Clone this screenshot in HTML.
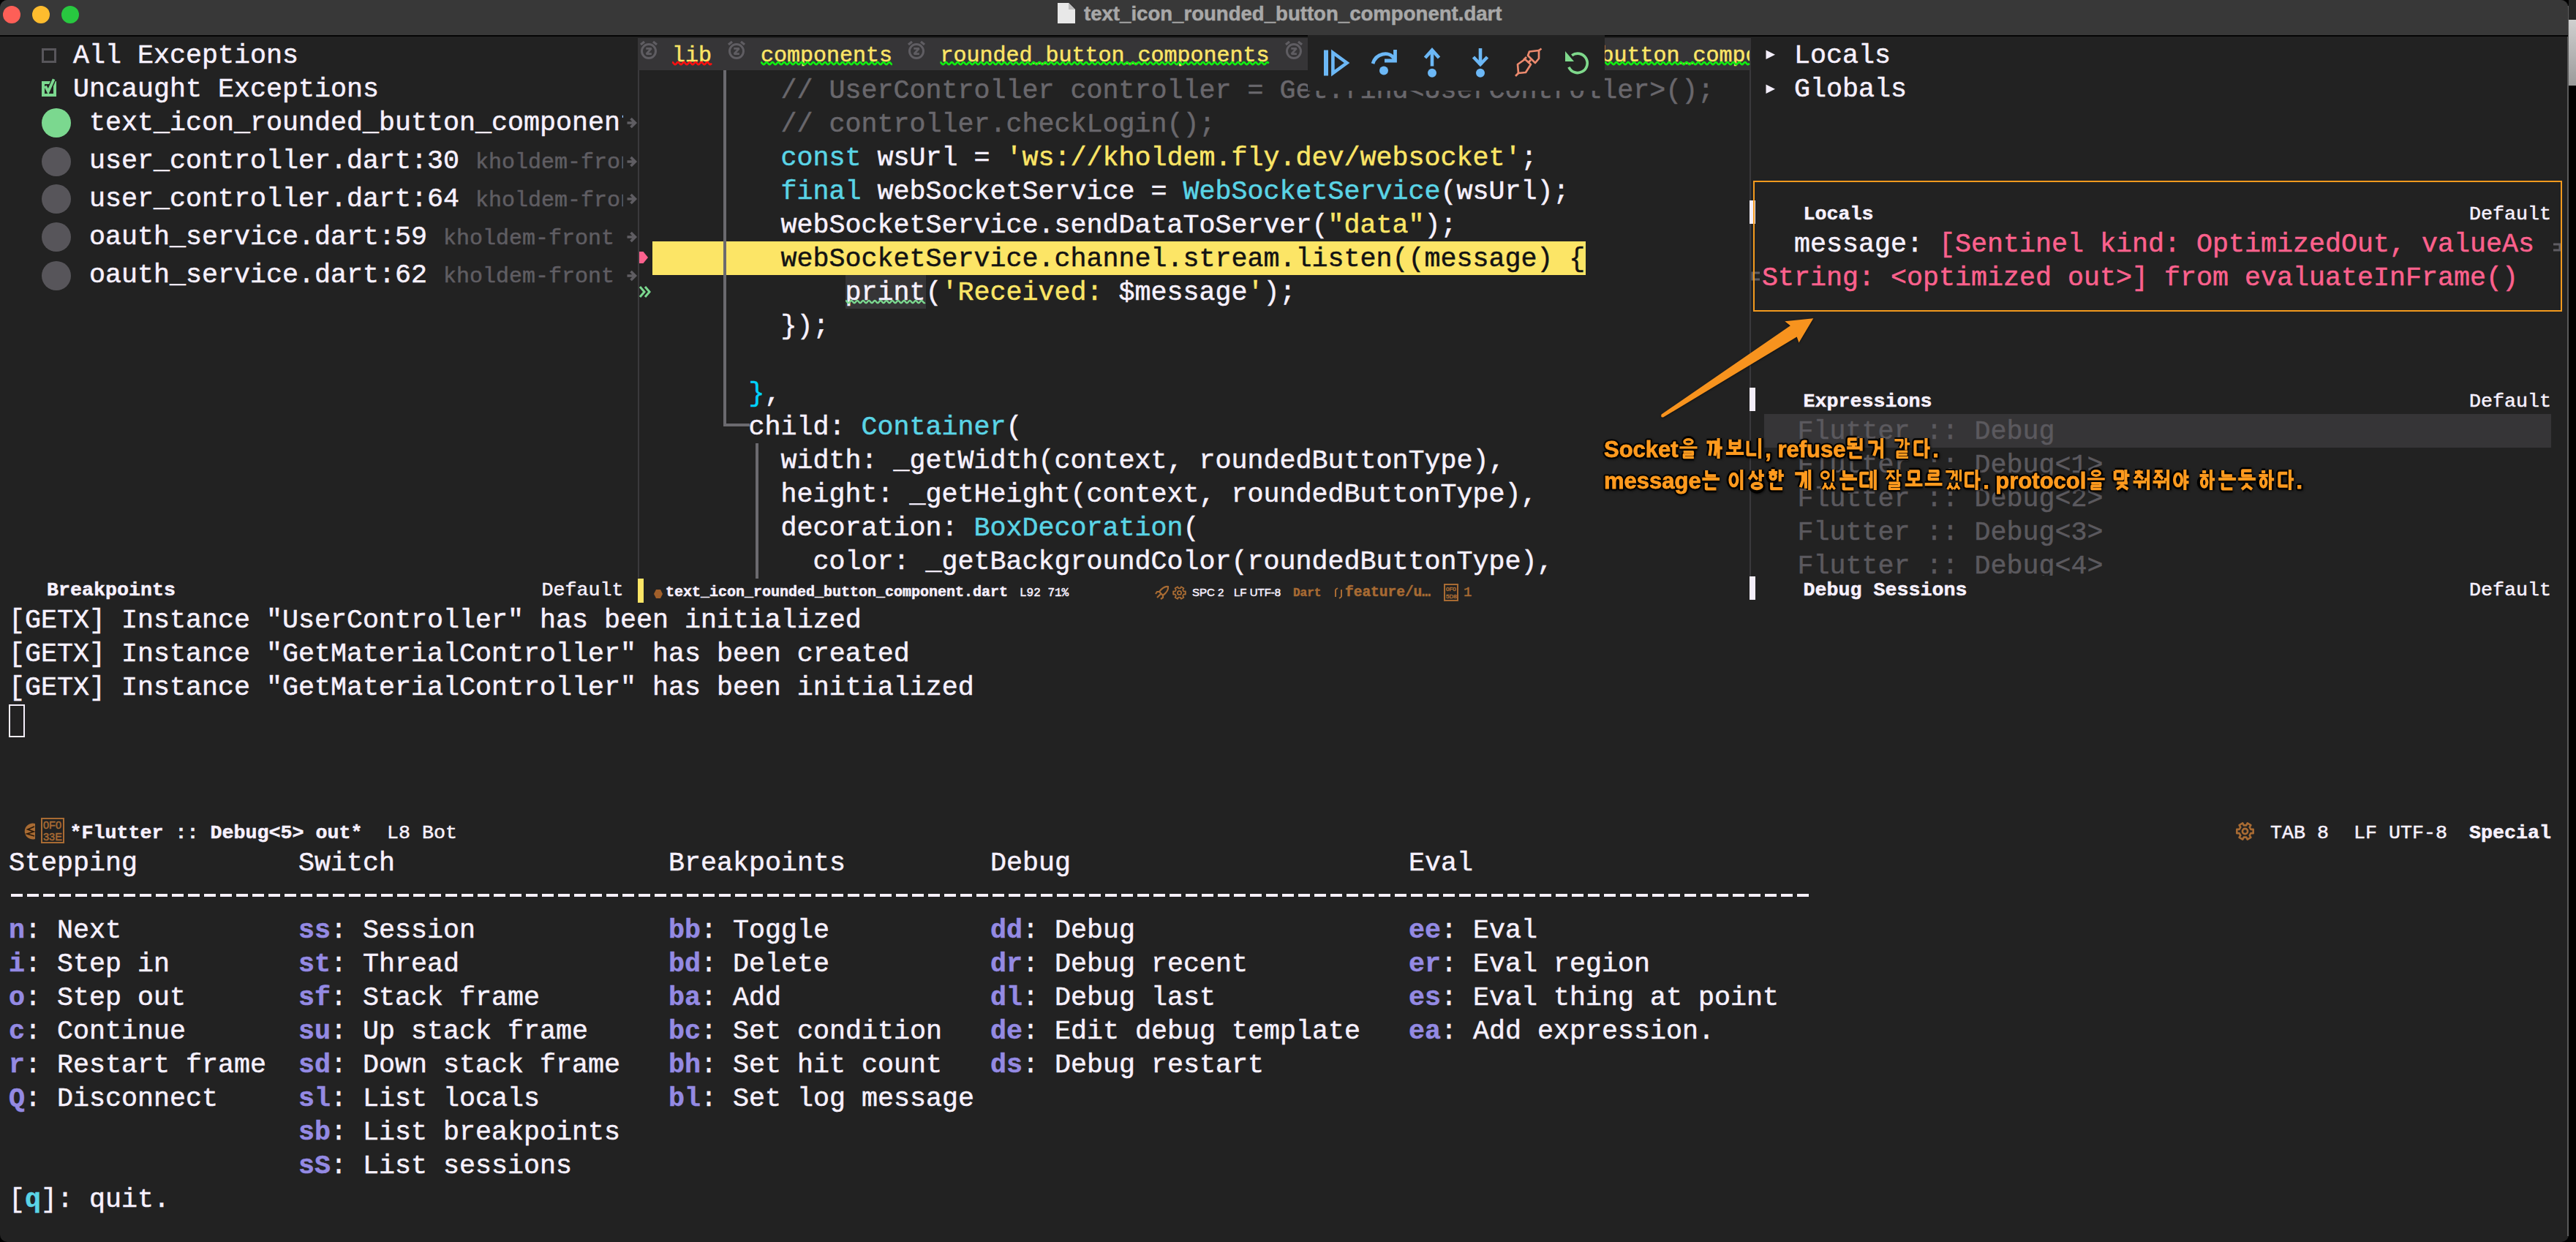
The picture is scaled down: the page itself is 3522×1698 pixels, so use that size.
<!DOCTYPE html>
<html><head><meta charset="utf-8"><style>
html,body{margin:0;padding:0;}
body{width:3522px;height:1698px;position:relative;overflow:hidden;background:#0b0b0b;}
.t{position:absolute;white-space:pre;-webkit-text-stroke:0.5px currentColor;}
svg{overflow:visible}
</style></head><body>
<div style="position:absolute;left:0px;top:0px;width:3522px;height:1698px;background:#000000;"></div>
<div style="position:absolute;left:3512px;top:0px;width:10px;height:27px;background:#262626;"></div>
<div style="position:absolute;left:3512px;top:27px;width:10px;height:90px;background:#c4c4c4;background:linear-gradient(#d0d0d0,#9a9a9a)"></div>
<div style="position:absolute;left:0;top:0;width:3512px;height:1698px;background:#222222;border-radius:10px 10px 10px 10px;overflow:hidden" id=win></div>
<div style="position:absolute;left:3510px;top:8px;width:2px;height:1682px;background:#5a5a5a;"></div>
<div style="position:absolute;left:0px;top:0px;width:3511px;height:48px;background:#383838;border-radius:10px 10px 0 0"></div>
<div style="position:absolute;left:0px;top:48px;width:3511px;height:1.6px;background:#050505;"></div>
<div style="position:absolute;left:4px;top:8px;width:24px;height:24px;background:#fe5f57;border-radius:50%"></div>
<div style="position:absolute;left:44px;top:8px;width:24px;height:24px;background:#febc2e;border-radius:50%"></div>
<div style="position:absolute;left:84px;top:8px;width:24px;height:24px;background:#28c840;border-radius:50%"></div>
<svg style="position:absolute;left:1444px;top:3px;" width="28" height="31" viewBox="0 0 28 31"><path d="M2 1 H17 L26 10 V29 H2 Z" fill="#e8e8e8"/><path d="M17 1 V10 H26" fill="#bdbdbd"/></svg>
<div class=t style="left:1482px;top:-2.00px;font-family:'Liberation Sans';font-weight:bold;font-size:27.58px;line-height:41.37px;"><span style="color:#a8a8a8;">text_icon_rounded_button_component.dart</span></div>
<div style="position:absolute;left:57px;top:66px;width:20px;height:20px;background:transparent;box-sizing:border-box;border:3.5px solid #58565b"></div>
<div class=t style="left:100.0px;top:49.00px;font-family:'Liberation Mono';font-weight:normal;font-size:36.67px;line-height:55.005px;"><span style="color:#f7f1ff;">All Exceptions</span></div>
<div style="position:absolute;left:57px;top:111px;width:20px;height:21px;background:transparent;box-sizing:border-box;border:4px solid #7bd88f"></div>
<svg style="position:absolute;left:57px;top:106px;" width="22" height="26" viewBox="0 0 22 26"><path d="M12.2 12.5 L16.6 2.2" fill="none" stroke="#222222" stroke-width="6.4"/><path d="M4.9 11.6 L8.9 19.2 L16.6 2.2" fill="none" stroke="#7bd88f" stroke-width="3.8"/></svg>
<div class=t style="left:100.0px;top:95.00px;font-family:'Liberation Mono';font-weight:normal;font-size:36.67px;line-height:55.005px;"><span style="color:#f7f1ff;">Uncaught Exceptions</span></div>
<div style="position:absolute;left:57.3px;top:148.3px;width:40px;height:40px;background:#7bd88f;border-radius:50%"></div>
<div style="position:absolute;left:122px;top:138.3px;width:730px;height:60px;overflow:hidden">
<div class=t style="left:0px;top:3.00px;font-family:'Liberation Mono';font-weight:normal;font-size:36.67px;line-height:55.005px;"><span style="color:#f7f1ff;">text_icon_rounded_button_component.dart:92</span></div>
</div>
<svg style="position:absolute;left:857px;top:160.3px;" width="14" height="16" viewBox="0 0 14 16"><path d="M0.5 8 H11 M5.5 2 L11.5 8 L5.5 14" fill="none" stroke="#5f5d62" stroke-width="3.6"/></svg>
<div style="position:absolute;left:57.3px;top:200.6px;width:40px;height:40px;background:#57555a;border-radius:50%"></div>
<div style="position:absolute;left:122px;top:190.6px;width:730px;height:60px;overflow:hidden">
<div class=t style="left:0px;top:2.80px;font-family:'Liberation Mono';font-weight:normal;font-size:36.67px;line-height:55.005px;"><span style="color:#f7f1ff;">user_controller.dart:30</span></div>
<div class=t style="left:528.0px;top:9.80px;font-family:'Liberation Mono';font-weight:normal;font-size:30px;line-height:45.0px;"><span style="color:#5f5d62;">kholdem-front</span></div>
</div>
<svg style="position:absolute;left:857px;top:212.6px;" width="14" height="16" viewBox="0 0 14 16"><path d="M0.5 8 H11 M5.5 2 L11.5 8 L5.5 14" fill="none" stroke="#5f5d62" stroke-width="3.6"/></svg>
<div style="position:absolute;left:57.3px;top:252.3px;width:40px;height:40px;background:#57555a;border-radius:50%"></div>
<div style="position:absolute;left:122px;top:242.3px;width:730px;height:60px;overflow:hidden">
<div class=t style="left:0px;top:3.00px;font-family:'Liberation Mono';font-weight:normal;font-size:36.67px;line-height:55.005px;"><span style="color:#f7f1ff;">user_controller.dart:64</span></div>
<div class=t style="left:528.0px;top:10.00px;font-family:'Liberation Mono';font-weight:normal;font-size:30px;line-height:45.0px;"><span style="color:#5f5d62;">kholdem-front</span></div>
</div>
<svg style="position:absolute;left:857px;top:264.3px;" width="14" height="16" viewBox="0 0 14 16"><path d="M0.5 8 H11 M5.5 2 L11.5 8 L5.5 14" fill="none" stroke="#5f5d62" stroke-width="3.6"/></svg>
<div style="position:absolute;left:57.3px;top:304.2px;width:40px;height:40px;background:#57555a;border-radius:50%"></div>
<div style="position:absolute;left:122px;top:294.2px;width:730px;height:60px;overflow:hidden">
<div class=t style="left:0px;top:2.40px;font-family:'Liberation Mono';font-weight:normal;font-size:36.67px;line-height:55.005px;"><span style="color:#f7f1ff;">oauth_service.dart:59</span></div>
<div class=t style="left:484.0px;top:9.40px;font-family:'Liberation Mono';font-weight:normal;font-size:30px;line-height:45.0px;"><span style="color:#5f5d62;">kholdem-front</span></div>
</div>
<svg style="position:absolute;left:857px;top:316.2px;" width="14" height="16" viewBox="0 0 14 16"><path d="M0.5 8 H11 M5.5 2 L11.5 8 L5.5 14" fill="none" stroke="#5f5d62" stroke-width="3.6"/></svg>
<div style="position:absolute;left:57.3px;top:356.5px;width:40px;height:40px;background:#57555a;border-radius:50%"></div>
<div style="position:absolute;left:122px;top:346.5px;width:730px;height:60px;overflow:hidden">
<div class=t style="left:0px;top:2.50px;font-family:'Liberation Mono';font-weight:normal;font-size:36.67px;line-height:55.005px;"><span style="color:#f7f1ff;">oauth_service.dart:62</span></div>
<div class=t style="left:484.0px;top:9.50px;font-family:'Liberation Mono';font-weight:normal;font-size:30px;line-height:45.0px;"><span style="color:#5f5d62;">kholdem-front</span></div>
</div>
<svg style="position:absolute;left:857px;top:368.5px;" width="14" height="16" viewBox="0 0 14 16"><path d="M0.5 8 H11 M5.5 2 L11.5 8 L5.5 14" fill="none" stroke="#5f5d62" stroke-width="3.6"/></svg>
<div class=t style="left:64px;top:787.00px;font-family:'Liberation Mono';font-weight:bold;font-size:26.67px;line-height:40.005px;"><span style="color:#f7f1ff;">Breakpoints</span></div>
<div class=t style="left:740.5px;top:787.00px;font-family:'Liberation Mono';font-weight:normal;font-size:26.67px;line-height:40.005px;"><span style="color:#f7f1ff;">Default</span></div>
<div style="position:absolute;left:872px;top:96px;width:2px;height:694px;background:#3a393c;"></div>
<div style="position:absolute;left:2392px;top:96px;width:2px;height:178px;background:#3a393c;"></div>
<div style="position:absolute;left:2392px;top:306px;width:2px;height:224px;background:#3a393c;"></div>
<div style="position:absolute;left:2392px;top:562px;width:2px;height:226px;background:#3a393c;"></div>
<div style="position:absolute;left:872px;top:52px;width:1522px;height:44px;background:#363537;"></div>
<div style="position:absolute;left:892px;top:330px;width:1276px;height:46px;background:#fce566;"></div>
<div style="position:absolute;left:1155.5px;top:376px;width:110px;height:46px;background:#363537;"></div>
<div style="position:absolute;left:989px;top:96px;width:4px;height:486px;background:#6b6a6f;"></div>
<div style="position:absolute;left:989px;top:579px;width:36px;height:3.5px;background:#6b6a6f;"></div>
<div style="position:absolute;left:1033px;top:606px;width:4px;height:185px;background:#6b6a6f;"></div>
<div style="position:absolute;left:874px;top:96px;width:1518px;height:694px;overflow:hidden">
<div class=t style="left:193.5px;top:0.50px;font-family:'Liberation Mono';font-weight:normal;font-size:36.67px;line-height:55.005px;"><span style="color:#69676c;">// UserController controller = Get.find&lt;UserController&gt;();</span></div>
<div class=t style="left:193.5px;top:46.50px;font-family:'Liberation Mono';font-weight:normal;font-size:36.67px;line-height:55.005px;"><span style="color:#69676c;">// controller.checkLogin();</span></div>
<div class=t style="left:193.5px;top:92.50px;font-family:'Liberation Mono';font-weight:normal;font-size:36.67px;line-height:55.005px;"><span style="color:#5ad4e6;">const</span><span style="color:#f7f1ff;"> wsUrl = </span><span style="color:#fce566;">'ws://kholdem.fly.dev/websocket'</span><span style="color:#f7f1ff;">;</span></div>
<div class=t style="left:193.5px;top:138.50px;font-family:'Liberation Mono';font-weight:normal;font-size:36.67px;line-height:55.005px;"><span style="color:#5ad4e6;">final</span><span style="color:#f7f1ff;"> webSocketService = </span><span style="color:#5ad4e6;">WebSocketService</span><span style="color:#f7f1ff;">(wsUrl);</span></div>
<div class=t style="left:193.5px;top:184.50px;font-family:'Liberation Mono';font-weight:normal;font-size:36.67px;line-height:55.005px;"><span style="color:#f7f1ff;">webSocketService.sendDataToServer(</span><span style="color:#fce566;">"data"</span><span style="color:#f7f1ff;">);</span></div>
<div class=t style="left:193.5px;top:230.50px;font-family:'Liberation Mono';font-weight:normal;font-size:36.67px;line-height:55.005px;"><span style="color:#131313;">webSocketService.channel.stream.listen((message) {</span></div>
<div class=t style="left:281.5px;top:276.50px;font-family:'Liberation Mono';font-weight:normal;font-size:36.67px;line-height:55.005px;"><span style="color:#f7f1ff;">print(</span><span style="color:#fce566;">'Received: </span><span style="color:#f7f1ff;">$message</span><span style="color:#fce566;">'</span><span style="color:#f7f1ff;">);</span></div>
<div class=t style="left:193.5px;top:322.50px;font-family:'Liberation Mono';font-weight:normal;font-size:36.67px;line-height:55.005px;"><span style="color:#f7f1ff;">});</span></div>
<div class=t style="left:149.5px;top:414.50px;font-family:'Liberation Mono';font-weight:normal;font-size:36.67px;line-height:55.005px;"><span style="color:#00d2ff;">}</span><span style="color:#f7f1ff;">,</span></div>
<div class=t style="left:149.5px;top:460.50px;font-family:'Liberation Mono';font-weight:normal;font-size:36.67px;line-height:55.005px;"><span style="color:#f7f1ff;">child: </span><span style="color:#5ad4e6;">Container</span><span style="color:#f7f1ff;">(</span></div>
<div class=t style="left:193.5px;top:506.50px;font-family:'Liberation Mono';font-weight:normal;font-size:36.67px;line-height:55.005px;"><span style="color:#f7f1ff;">width: _getWidth(context, roundedButtonType),</span></div>
<div class=t style="left:193.5px;top:552.50px;font-family:'Liberation Mono';font-weight:normal;font-size:36.67px;line-height:55.005px;"><span style="color:#f7f1ff;">height: _getHeight(context, roundedButtonType),</span></div>
<div class=t style="left:193.5px;top:598.50px;font-family:'Liberation Mono';font-weight:normal;font-size:36.67px;line-height:55.005px;"><span style="color:#f7f1ff;">decoration: </span><span style="color:#5ad4e6;">BoxDecoration</span><span style="color:#f7f1ff;">(</span></div>
<div class=t style="left:237.5px;top:644.50px;font-family:'Liberation Mono';font-weight:normal;font-size:36.67px;line-height:55.005px;"><span style="color:#f7f1ff;">color: _getBackgroundColor(roundedButtonType),</span></div>
</div>
<svg style="position:absolute;left:1154px;top:409.4px;" width="113" height="7.2" viewBox="0 0 113 7.2"><polyline points="2.0,2.00 2.5,2.12 3.0,2.47 3.5,2.99 4.0,3.60 4.5,4.21 5.0,4.73 5.5,5.08 6.0,5.20 6.5,5.08 7.0,4.73 7.5,4.21 8.0,3.60 8.5,2.99 9.0,2.47 9.5,2.12 10.0,2.00 10.5,2.12 11.0,2.47 11.5,2.99 12.0,3.60 12.5,4.21 13.0,4.73 13.5,5.08 14.0,5.20 14.5,5.08 15.0,4.73 15.5,4.21 16.0,3.60 16.5,2.99 17.0,2.47 17.5,2.12 18.0,2.00 18.5,2.12 19.0,2.47 19.5,2.99 20.0,3.60 20.5,4.21 21.0,4.73 21.5,5.08 22.0,5.20 22.5,5.08 23.0,4.73 23.5,4.21 24.0,3.60 24.5,2.99 25.0,2.47 25.5,2.12 26.0,2.00 26.5,2.12 27.0,2.47 27.5,2.99 28.0,3.60 28.5,4.21 29.0,4.73 29.5,5.08 30.0,5.20 30.5,5.08 31.0,4.73 31.5,4.21 32.0,3.60 32.5,2.99 33.0,2.47 33.5,2.12 34.0,2.00 34.5,2.12 35.0,2.47 35.5,2.99 36.0,3.60 36.5,4.21 37.0,4.73 37.5,5.08 38.0,5.20 38.5,5.08 39.0,4.73 39.5,4.21 40.0,3.60 40.5,2.99 41.0,2.47 41.5,2.12 42.0,2.00 42.5,2.12 43.0,2.47 43.5,2.99 44.0,3.60 44.5,4.21 45.0,4.73 45.5,5.08 46.0,5.20 46.5,5.08 47.0,4.73 47.5,4.21 48.0,3.60 48.5,2.99 49.0,2.47 49.5,2.12 50.0,2.00 50.5,2.12 51.0,2.47 51.5,2.99 52.0,3.60 52.5,4.21 53.0,4.73 53.5,5.08 54.0,5.20 54.5,5.08 55.0,4.73 55.5,4.21 56.0,3.60 56.5,2.99 57.0,2.47 57.5,2.12 58.0,2.00 58.5,2.12 59.0,2.47 59.5,2.99 60.0,3.60 60.5,4.21 61.0,4.73 61.5,5.08 62.0,5.20 62.5,5.08 63.0,4.73 63.5,4.21 64.0,3.60 64.5,2.99 65.0,2.47 65.5,2.12 66.0,2.00 66.5,2.12 67.0,2.47 67.5,2.99 68.0,3.60 68.5,4.21 69.0,4.73 69.5,5.08 70.0,5.20 70.5,5.08 71.0,4.73 71.5,4.21 72.0,3.60 72.5,2.99 73.0,2.47 73.5,2.12 74.0,2.00 74.5,2.12 75.0,2.47 75.5,2.99 76.0,3.60 76.5,4.21 77.0,4.73 77.5,5.08 78.0,5.20 78.5,5.08 79.0,4.73 79.5,4.21 80.0,3.60 80.5,2.99 81.0,2.47 81.5,2.12 82.0,2.00 82.5,2.12 83.0,2.47 83.5,2.99 84.0,3.60 84.5,4.21 85.0,4.73 85.5,5.08 86.0,5.20 86.5,5.08 87.0,4.73 87.5,4.21 88.0,3.60 88.5,2.99 89.0,2.47 89.5,2.12 90.0,2.00 90.5,2.12 91.0,2.47 91.5,2.99 92.0,3.60 92.5,4.21 93.0,4.73 93.5,5.08 94.0,5.20 94.5,5.08 95.0,4.73 95.5,4.21 96.0,3.60 96.5,2.99 97.0,2.47 97.5,2.12 98.0,2.00 98.5,2.12 99.0,2.47 99.5,2.99 100.0,3.60 100.5,4.21 101.0,4.73 101.5,5.08 102.0,5.20 102.5,5.08 103.0,4.73 103.5,4.21 104.0,3.60 104.5,2.99 105.0,2.47 105.5,2.12 106.0,2.00 106.5,2.12 107.0,2.47 107.5,2.99 108.0,3.60 108.5,4.21 109.0,4.73 109.5,5.08 110.0,5.20 110.5,5.08 111.0,4.73" fill="none" stroke="#7bd88f" stroke-width="2.4" stroke-linejoin="round"/></svg>
<svg style="position:absolute;left:874px;top:343px;" width="13" height="18" viewBox="0 0 13 18"><path d="M0 1 H5.5 L12 9 L5.5 17 H0 Z" fill="#fc618d"/></svg>
<svg style="position:absolute;left:873px;top:390px;" width="19" height="18" viewBox="0 0 19 18"><path d="M2 2 L8 9 L2 16 M9 2 L15 9 L9 16" fill="none" stroke="#7bd88f" stroke-width="3"/></svg>
<svg style="position:absolute;left:874px;top:55px;" width="26" height="27" viewBox="0 0 26 27"><circle cx="13" cy="15" r="9.5" fill="none" stroke="#5f5d62" stroke-width="3"/><path d="M2 6 L7 2 M24 6 L19 2" stroke="#5f5d62" stroke-width="3.2"/><path d="M9.3 11.3 H16.5 L9.8 18.6 H16.9" fill="none" stroke="#5f5d62" stroke-width="2.8" stroke-linejoin="bevel"/></svg>
<div class=t style="left:919px;top:53.50px;font-family:'Liberation Mono';font-weight:normal;font-size:30px;line-height:45.0px;"><span style="color:#fce566;">lib</span></div>
<svg style="position:absolute;left:917px;top:83.30000000000001px;" width="58" height="7.2" viewBox="0 0 58 7.2"><polyline points="2.0,2.00 2.5,2.12 3.0,2.47 3.5,2.99 4.0,3.60 4.5,4.21 5.0,4.73 5.5,5.08 6.0,5.20 6.5,5.08 7.0,4.73 7.5,4.21 8.0,3.60 8.5,2.99 9.0,2.47 9.5,2.12 10.0,2.00 10.5,2.12 11.0,2.47 11.5,2.99 12.0,3.60 12.5,4.21 13.0,4.73 13.5,5.08 14.0,5.20 14.5,5.08 15.0,4.73 15.5,4.21 16.0,3.60 16.5,2.99 17.0,2.47 17.5,2.12 18.0,2.00 18.5,2.12 19.0,2.47 19.5,2.99 20.0,3.60 20.5,4.21 21.0,4.73 21.5,5.08 22.0,5.20 22.5,5.08 23.0,4.73 23.5,4.21 24.0,3.60 24.5,2.99 25.0,2.47 25.5,2.12 26.0,2.00 26.5,2.12 27.0,2.47 27.5,2.99 28.0,3.60 28.5,4.21 29.0,4.73 29.5,5.08 30.0,5.20 30.5,5.08 31.0,4.73 31.5,4.21 32.0,3.60 32.5,2.99 33.0,2.47 33.5,2.12 34.0,2.00 34.5,2.12 35.0,2.47 35.5,2.99 36.0,3.60 36.5,4.21 37.0,4.73 37.5,5.08 38.0,5.20 38.5,5.08 39.0,4.73 39.5,4.21 40.0,3.60 40.5,2.99 41.0,2.47 41.5,2.12 42.0,2.00 42.5,2.12 43.0,2.47 43.5,2.99 44.0,3.60 44.5,4.21 45.0,4.73 45.5,5.08 46.0,5.20 46.5,5.08 47.0,4.73 47.5,4.21 48.0,3.60 48.5,2.99 49.0,2.47 49.5,2.12 50.0,2.00 50.5,2.12 51.0,2.47 51.5,2.99 52.0,3.60 52.5,4.21 53.0,4.73 53.5,5.08 54.0,5.20 54.5,5.08 55.0,4.73 55.5,4.21 56.0,3.60" fill="none" stroke="#ff1010" stroke-width="2.6" stroke-linejoin="round"/></svg>
<svg style="position:absolute;left:994px;top:55px;" width="26" height="27" viewBox="0 0 26 27"><circle cx="13" cy="15" r="9.5" fill="none" stroke="#5f5d62" stroke-width="3"/><path d="M2 6 L7 2 M24 6 L19 2" stroke="#5f5d62" stroke-width="3.2"/><path d="M9.3 11.3 H16.5 L9.8 18.6 H16.9" fill="none" stroke="#5f5d62" stroke-width="2.8" stroke-linejoin="bevel"/></svg>
<div class=t style="left:1040px;top:53.50px;font-family:'Liberation Mono';font-weight:normal;font-size:30px;line-height:45.0px;"><span style="color:#fce566;">components</span></div>
<svg style="position:absolute;left:1038px;top:83.30000000000001px;" width="184" height="7.2" viewBox="0 0 184 7.2"><polyline points="2.0,2.00 2.5,2.12 3.0,2.47 3.5,2.99 4.0,3.60 4.5,4.21 5.0,4.73 5.5,5.08 6.0,5.20 6.5,5.08 7.0,4.73 7.5,4.21 8.0,3.60 8.5,2.99 9.0,2.47 9.5,2.12 10.0,2.00 10.5,2.12 11.0,2.47 11.5,2.99 12.0,3.60 12.5,4.21 13.0,4.73 13.5,5.08 14.0,5.20 14.5,5.08 15.0,4.73 15.5,4.21 16.0,3.60 16.5,2.99 17.0,2.47 17.5,2.12 18.0,2.00 18.5,2.12 19.0,2.47 19.5,2.99 20.0,3.60 20.5,4.21 21.0,4.73 21.5,5.08 22.0,5.20 22.5,5.08 23.0,4.73 23.5,4.21 24.0,3.60 24.5,2.99 25.0,2.47 25.5,2.12 26.0,2.00 26.5,2.12 27.0,2.47 27.5,2.99 28.0,3.60 28.5,4.21 29.0,4.73 29.5,5.08 30.0,5.20 30.5,5.08 31.0,4.73 31.5,4.21 32.0,3.60 32.5,2.99 33.0,2.47 33.5,2.12 34.0,2.00 34.5,2.12 35.0,2.47 35.5,2.99 36.0,3.60 36.5,4.21 37.0,4.73 37.5,5.08 38.0,5.20 38.5,5.08 39.0,4.73 39.5,4.21 40.0,3.60 40.5,2.99 41.0,2.47 41.5,2.12 42.0,2.00 42.5,2.12 43.0,2.47 43.5,2.99 44.0,3.60 44.5,4.21 45.0,4.73 45.5,5.08 46.0,5.20 46.5,5.08 47.0,4.73 47.5,4.21 48.0,3.60 48.5,2.99 49.0,2.47 49.5,2.12 50.0,2.00 50.5,2.12 51.0,2.47 51.5,2.99 52.0,3.60 52.5,4.21 53.0,4.73 53.5,5.08 54.0,5.20 54.5,5.08 55.0,4.73 55.5,4.21 56.0,3.60 56.5,2.99 57.0,2.47 57.5,2.12 58.0,2.00 58.5,2.12 59.0,2.47 59.5,2.99 60.0,3.60 60.5,4.21 61.0,4.73 61.5,5.08 62.0,5.20 62.5,5.08 63.0,4.73 63.5,4.21 64.0,3.60 64.5,2.99 65.0,2.47 65.5,2.12 66.0,2.00 66.5,2.12 67.0,2.47 67.5,2.99 68.0,3.60 68.5,4.21 69.0,4.73 69.5,5.08 70.0,5.20 70.5,5.08 71.0,4.73 71.5,4.21 72.0,3.60 72.5,2.99 73.0,2.47 73.5,2.12 74.0,2.00 74.5,2.12 75.0,2.47 75.5,2.99 76.0,3.60 76.5,4.21 77.0,4.73 77.5,5.08 78.0,5.20 78.5,5.08 79.0,4.73 79.5,4.21 80.0,3.60 80.5,2.99 81.0,2.47 81.5,2.12 82.0,2.00 82.5,2.12 83.0,2.47 83.5,2.99 84.0,3.60 84.5,4.21 85.0,4.73 85.5,5.08 86.0,5.20 86.5,5.08 87.0,4.73 87.5,4.21 88.0,3.60 88.5,2.99 89.0,2.47 89.5,2.12 90.0,2.00 90.5,2.12 91.0,2.47 91.5,2.99 92.0,3.60 92.5,4.21 93.0,4.73 93.5,5.08 94.0,5.20 94.5,5.08 95.0,4.73 95.5,4.21 96.0,3.60 96.5,2.99 97.0,2.47 97.5,2.12 98.0,2.00 98.5,2.12 99.0,2.47 99.5,2.99 100.0,3.60 100.5,4.21 101.0,4.73 101.5,5.08 102.0,5.20 102.5,5.08 103.0,4.73 103.5,4.21 104.0,3.60 104.5,2.99 105.0,2.47 105.5,2.12 106.0,2.00 106.5,2.12 107.0,2.47 107.5,2.99 108.0,3.60 108.5,4.21 109.0,4.73 109.5,5.08 110.0,5.20 110.5,5.08 111.0,4.73 111.5,4.21 112.0,3.60 112.5,2.99 113.0,2.47 113.5,2.12 114.0,2.00 114.5,2.12 115.0,2.47 115.5,2.99 116.0,3.60 116.5,4.21 117.0,4.73 117.5,5.08 118.0,5.20 118.5,5.08 119.0,4.73 119.5,4.21 120.0,3.60 120.5,2.99 121.0,2.47 121.5,2.12 122.0,2.00 122.5,2.12 123.0,2.47 123.5,2.99 124.0,3.60 124.5,4.21 125.0,4.73 125.5,5.08 126.0,5.20 126.5,5.08 127.0,4.73 127.5,4.21 128.0,3.60 128.5,2.99 129.0,2.47 129.5,2.12 130.0,2.00 130.5,2.12 131.0,2.47 131.5,2.99 132.0,3.60 132.5,4.21 133.0,4.73 133.5,5.08 134.0,5.20 134.5,5.08 135.0,4.73 135.5,4.21 136.0,3.60 136.5,2.99 137.0,2.47 137.5,2.12 138.0,2.00 138.5,2.12 139.0,2.47 139.5,2.99 140.0,3.60 140.5,4.21 141.0,4.73 141.5,5.08 142.0,5.20 142.5,5.08 143.0,4.73 143.5,4.21 144.0,3.60 144.5,2.99 145.0,2.47 145.5,2.12 146.0,2.00 146.5,2.12 147.0,2.47 147.5,2.99 148.0,3.60 148.5,4.21 149.0,4.73 149.5,5.08 150.0,5.20 150.5,5.08 151.0,4.73 151.5,4.21 152.0,3.60 152.5,2.99 153.0,2.47 153.5,2.12 154.0,2.00 154.5,2.12 155.0,2.47 155.5,2.99 156.0,3.60 156.5,4.21 157.0,4.73 157.5,5.08 158.0,5.20 158.5,5.08 159.0,4.73 159.5,4.21 160.0,3.60 160.5,2.99 161.0,2.47 161.5,2.12 162.0,2.00 162.5,2.12 163.0,2.47 163.5,2.99 164.0,3.60 164.5,4.21 165.0,4.73 165.5,5.08 166.0,5.20 166.5,5.08 167.0,4.73 167.5,4.21 168.0,3.60 168.5,2.99 169.0,2.47 169.5,2.12 170.0,2.00 170.5,2.12 171.0,2.47 171.5,2.99 172.0,3.60 172.5,4.21 173.0,4.73 173.5,5.08 174.0,5.20 174.5,5.08 175.0,4.73 175.5,4.21 176.0,3.60 176.5,2.99 177.0,2.47 177.5,2.12 178.0,2.00 178.5,2.12 179.0,2.47 179.5,2.99 180.0,3.60 180.5,4.21 181.0,4.73 181.5,5.08 182.0,5.20" fill="none" stroke="#10f010" stroke-width="2.6" stroke-linejoin="round"/></svg>
<svg style="position:absolute;left:1240px;top:55px;" width="26" height="27" viewBox="0 0 26 27"><circle cx="13" cy="15" r="9.5" fill="none" stroke="#5f5d62" stroke-width="3"/><path d="M2 6 L7 2 M24 6 L19 2" stroke="#5f5d62" stroke-width="3.2"/><path d="M9.3 11.3 H16.5 L9.8 18.6 H16.9" fill="none" stroke="#5f5d62" stroke-width="2.8" stroke-linejoin="bevel"/></svg>
<div class=t style="left:1285.4px;top:53.50px;font-family:'Liberation Mono';font-weight:normal;font-size:30px;line-height:45.0px;"><span style="color:#fce566;">rounded_button_components</span></div>
<svg style="position:absolute;left:1283.4px;top:83.30000000000001px;" width="454.0" height="7.2" viewBox="0 0 454.0 7.2"><polyline points="2.0,2.00 2.5,2.12 3.0,2.47 3.5,2.99 4.0,3.60 4.5,4.21 5.0,4.73 5.5,5.08 6.0,5.20 6.5,5.08 7.0,4.73 7.5,4.21 8.0,3.60 8.5,2.99 9.0,2.47 9.5,2.12 10.0,2.00 10.5,2.12 11.0,2.47 11.5,2.99 12.0,3.60 12.5,4.21 13.0,4.73 13.5,5.08 14.0,5.20 14.5,5.08 15.0,4.73 15.5,4.21 16.0,3.60 16.5,2.99 17.0,2.47 17.5,2.12 18.0,2.00 18.5,2.12 19.0,2.47 19.5,2.99 20.0,3.60 20.5,4.21 21.0,4.73 21.5,5.08 22.0,5.20 22.5,5.08 23.0,4.73 23.5,4.21 24.0,3.60 24.5,2.99 25.0,2.47 25.5,2.12 26.0,2.00 26.5,2.12 27.0,2.47 27.5,2.99 28.0,3.60 28.5,4.21 29.0,4.73 29.5,5.08 30.0,5.20 30.5,5.08 31.0,4.73 31.5,4.21 32.0,3.60 32.5,2.99 33.0,2.47 33.5,2.12 34.0,2.00 34.5,2.12 35.0,2.47 35.5,2.99 36.0,3.60 36.5,4.21 37.0,4.73 37.5,5.08 38.0,5.20 38.5,5.08 39.0,4.73 39.5,4.21 40.0,3.60 40.5,2.99 41.0,2.47 41.5,2.12 42.0,2.00 42.5,2.12 43.0,2.47 43.5,2.99 44.0,3.60 44.5,4.21 45.0,4.73 45.5,5.08 46.0,5.20 46.5,5.08 47.0,4.73 47.5,4.21 48.0,3.60 48.5,2.99 49.0,2.47 49.5,2.12 50.0,2.00 50.5,2.12 51.0,2.47 51.5,2.99 52.0,3.60 52.5,4.21 53.0,4.73 53.5,5.08 54.0,5.20 54.5,5.08 55.0,4.73 55.5,4.21 56.0,3.60 56.5,2.99 57.0,2.47 57.5,2.12 58.0,2.00 58.5,2.12 59.0,2.47 59.5,2.99 60.0,3.60 60.5,4.21 61.0,4.73 61.5,5.08 62.0,5.20 62.5,5.08 63.0,4.73 63.5,4.21 64.0,3.60 64.5,2.99 65.0,2.47 65.5,2.12 66.0,2.00 66.5,2.12 67.0,2.47 67.5,2.99 68.0,3.60 68.5,4.21 69.0,4.73 69.5,5.08 70.0,5.20 70.5,5.08 71.0,4.73 71.5,4.21 72.0,3.60 72.5,2.99 73.0,2.47 73.5,2.12 74.0,2.00 74.5,2.12 75.0,2.47 75.5,2.99 76.0,3.60 76.5,4.21 77.0,4.73 77.5,5.08 78.0,5.20 78.5,5.08 79.0,4.73 79.5,4.21 80.0,3.60 80.5,2.99 81.0,2.47 81.5,2.12 82.0,2.00 82.5,2.12 83.0,2.47 83.5,2.99 84.0,3.60 84.5,4.21 85.0,4.73 85.5,5.08 86.0,5.20 86.5,5.08 87.0,4.73 87.5,4.21 88.0,3.60 88.5,2.99 89.0,2.47 89.5,2.12 90.0,2.00 90.5,2.12 91.0,2.47 91.5,2.99 92.0,3.60 92.5,4.21 93.0,4.73 93.5,5.08 94.0,5.20 94.5,5.08 95.0,4.73 95.5,4.21 96.0,3.60 96.5,2.99 97.0,2.47 97.5,2.12 98.0,2.00 98.5,2.12 99.0,2.47 99.5,2.99 100.0,3.60 100.5,4.21 101.0,4.73 101.5,5.08 102.0,5.20 102.5,5.08 103.0,4.73 103.5,4.21 104.0,3.60 104.5,2.99 105.0,2.47 105.5,2.12 106.0,2.00 106.5,2.12 107.0,2.47 107.5,2.99 108.0,3.60 108.5,4.21 109.0,4.73 109.5,5.08 110.0,5.20 110.5,5.08 111.0,4.73 111.5,4.21 112.0,3.60 112.5,2.99 113.0,2.47 113.5,2.12 114.0,2.00 114.5,2.12 115.0,2.47 115.5,2.99 116.0,3.60 116.5,4.21 117.0,4.73 117.5,5.08 118.0,5.20 118.5,5.08 119.0,4.73 119.5,4.21 120.0,3.60 120.5,2.99 121.0,2.47 121.5,2.12 122.0,2.00 122.5,2.12 123.0,2.47 123.5,2.99 124.0,3.60 124.5,4.21 125.0,4.73 125.5,5.08 126.0,5.20 126.5,5.08 127.0,4.73 127.5,4.21 128.0,3.60 128.5,2.99 129.0,2.47 129.5,2.12 130.0,2.00 130.5,2.12 131.0,2.47 131.5,2.99 132.0,3.60 132.5,4.21 133.0,4.73 133.5,5.08 134.0,5.20 134.5,5.08 135.0,4.73 135.5,4.21 136.0,3.60 136.5,2.99 137.0,2.47 137.5,2.12 138.0,2.00 138.5,2.12 139.0,2.47 139.5,2.99 140.0,3.60 140.5,4.21 141.0,4.73 141.5,5.08 142.0,5.20 142.5,5.08 143.0,4.73 143.5,4.21 144.0,3.60 144.5,2.99 145.0,2.47 145.5,2.12 146.0,2.00 146.5,2.12 147.0,2.47 147.5,2.99 148.0,3.60 148.5,4.21 149.0,4.73 149.5,5.08 150.0,5.20 150.5,5.08 151.0,4.73 151.5,4.21 152.0,3.60 152.5,2.99 153.0,2.47 153.5,2.12 154.0,2.00 154.5,2.12 155.0,2.47 155.5,2.99 156.0,3.60 156.5,4.21 157.0,4.73 157.5,5.08 158.0,5.20 158.5,5.08 159.0,4.73 159.5,4.21 160.0,3.60 160.5,2.99 161.0,2.47 161.5,2.12 162.0,2.00 162.5,2.12 163.0,2.47 163.5,2.99 164.0,3.60 164.5,4.21 165.0,4.73 165.5,5.08 166.0,5.20 166.5,5.08 167.0,4.73 167.5,4.21 168.0,3.60 168.5,2.99 169.0,2.47 169.5,2.12 170.0,2.00 170.5,2.12 171.0,2.47 171.5,2.99 172.0,3.60 172.5,4.21 173.0,4.73 173.5,5.08 174.0,5.20 174.5,5.08 175.0,4.73 175.5,4.21 176.0,3.60 176.5,2.99 177.0,2.47 177.5,2.12 178.0,2.00 178.5,2.12 179.0,2.47 179.5,2.99 180.0,3.60 180.5,4.21 181.0,4.73 181.5,5.08 182.0,5.20 182.5,5.08 183.0,4.73 183.5,4.21 184.0,3.60 184.5,2.99 185.0,2.47 185.5,2.12 186.0,2.00 186.5,2.12 187.0,2.47 187.5,2.99 188.0,3.60 188.5,4.21 189.0,4.73 189.5,5.08 190.0,5.20 190.5,5.08 191.0,4.73 191.5,4.21 192.0,3.60 192.5,2.99 193.0,2.47 193.5,2.12 194.0,2.00 194.5,2.12 195.0,2.47 195.5,2.99 196.0,3.60 196.5,4.21 197.0,4.73 197.5,5.08 198.0,5.20 198.5,5.08 199.0,4.73 199.5,4.21 200.0,3.60 200.5,2.99 201.0,2.47 201.5,2.12 202.0,2.00 202.5,2.12 203.0,2.47 203.5,2.99 204.0,3.60 204.5,4.21 205.0,4.73 205.5,5.08 206.0,5.20 206.5,5.08 207.0,4.73 207.5,4.21 208.0,3.60 208.5,2.99 209.0,2.47 209.5,2.12 210.0,2.00 210.5,2.12 211.0,2.47 211.5,2.99 212.0,3.60 212.5,4.21 213.0,4.73 213.5,5.08 214.0,5.20 214.5,5.08 215.0,4.73 215.5,4.21 216.0,3.60 216.5,2.99 217.0,2.47 217.5,2.12 218.0,2.00 218.5,2.12 219.0,2.47 219.5,2.99 220.0,3.60 220.5,4.21 221.0,4.73 221.5,5.08 222.0,5.20 222.5,5.08 223.0,4.73 223.5,4.21 224.0,3.60 224.5,2.99 225.0,2.47 225.5,2.12 226.0,2.00 226.5,2.12 227.0,2.47 227.5,2.99 228.0,3.60 228.5,4.21 229.0,4.73 229.5,5.08 230.0,5.20 230.5,5.08 231.0,4.73 231.5,4.21 232.0,3.60 232.5,2.99 233.0,2.47 233.5,2.12 234.0,2.00 234.5,2.12 235.0,2.47 235.5,2.99 236.0,3.60 236.5,4.21 237.0,4.73 237.5,5.08 238.0,5.20 238.5,5.08 239.0,4.73 239.5,4.21 240.0,3.60 240.5,2.99 241.0,2.47 241.5,2.12 242.0,2.00 242.5,2.12 243.0,2.47 243.5,2.99 244.0,3.60 244.5,4.21 245.0,4.73 245.5,5.08 246.0,5.20 246.5,5.08 247.0,4.73 247.5,4.21 248.0,3.60 248.5,2.99 249.0,2.47 249.5,2.12 250.0,2.00 250.5,2.12 251.0,2.47 251.5,2.99 252.0,3.60 252.5,4.21 253.0,4.73 253.5,5.08 254.0,5.20 254.5,5.08 255.0,4.73 255.5,4.21 256.0,3.60 256.5,2.99 257.0,2.47 257.5,2.12 258.0,2.00 258.5,2.12 259.0,2.47 259.5,2.99 260.0,3.60 260.5,4.21 261.0,4.73 261.5,5.08 262.0,5.20 262.5,5.08 263.0,4.73 263.5,4.21 264.0,3.60 264.5,2.99 265.0,2.47 265.5,2.12 266.0,2.00 266.5,2.12 267.0,2.47 267.5,2.99 268.0,3.60 268.5,4.21 269.0,4.73 269.5,5.08 270.0,5.20 270.5,5.08 271.0,4.73 271.5,4.21 272.0,3.60 272.5,2.99 273.0,2.47 273.5,2.12 274.0,2.00 274.5,2.12 275.0,2.47 275.5,2.99 276.0,3.60 276.5,4.21 277.0,4.73 277.5,5.08 278.0,5.20 278.5,5.08 279.0,4.73 279.5,4.21 280.0,3.60 280.5,2.99 281.0,2.47 281.5,2.12 282.0,2.00 282.5,2.12 283.0,2.47 283.5,2.99 284.0,3.60 284.5,4.21 285.0,4.73 285.5,5.08 286.0,5.20 286.5,5.08 287.0,4.73 287.5,4.21 288.0,3.60 288.5,2.99 289.0,2.47 289.5,2.12 290.0,2.00 290.5,2.12 291.0,2.47 291.5,2.99 292.0,3.60 292.5,4.21 293.0,4.73 293.5,5.08 294.0,5.20 294.5,5.08 295.0,4.73 295.5,4.21 296.0,3.60 296.5,2.99 297.0,2.47 297.5,2.12 298.0,2.00 298.5,2.12 299.0,2.47 299.5,2.99 300.0,3.60 300.5,4.21 301.0,4.73 301.5,5.08 302.0,5.20 302.5,5.08 303.0,4.73 303.5,4.21 304.0,3.60 304.5,2.99 305.0,2.47 305.5,2.12 306.0,2.00 306.5,2.12 307.0,2.47 307.5,2.99 308.0,3.60 308.5,4.21 309.0,4.73 309.5,5.08 310.0,5.20 310.5,5.08 311.0,4.73 311.5,4.21 312.0,3.60 312.5,2.99 313.0,2.47 313.5,2.12 314.0,2.00 314.5,2.12 315.0,2.47 315.5,2.99 316.0,3.60 316.5,4.21 317.0,4.73 317.5,5.08 318.0,5.20 318.5,5.08 319.0,4.73 319.5,4.21 320.0,3.60 320.5,2.99 321.0,2.47 321.5,2.12 322.0,2.00 322.5,2.12 323.0,2.47 323.5,2.99 324.0,3.60 324.5,4.21 325.0,4.73 325.5,5.08 326.0,5.20 326.5,5.08 327.0,4.73 327.5,4.21 328.0,3.60 328.5,2.99 329.0,2.47 329.5,2.12 330.0,2.00 330.5,2.12 331.0,2.47 331.5,2.99 332.0,3.60 332.5,4.21 333.0,4.73 333.5,5.08 334.0,5.20 334.5,5.08 335.0,4.73 335.5,4.21 336.0,3.60 336.5,2.99 337.0,2.47 337.5,2.12 338.0,2.00 338.5,2.12 339.0,2.47 339.5,2.99 340.0,3.60 340.5,4.21 341.0,4.73 341.5,5.08 342.0,5.20 342.5,5.08 343.0,4.73 343.5,4.21 344.0,3.60 344.5,2.99 345.0,2.47 345.5,2.12 346.0,2.00 346.5,2.12 347.0,2.47 347.5,2.99 348.0,3.60 348.5,4.21 349.0,4.73 349.5,5.08 350.0,5.20 350.5,5.08 351.0,4.73 351.5,4.21 352.0,3.60 352.5,2.99 353.0,2.47 353.5,2.12 354.0,2.00 354.5,2.12 355.0,2.47 355.5,2.99 356.0,3.60 356.5,4.21 357.0,4.73 357.5,5.08 358.0,5.20 358.5,5.08 359.0,4.73 359.5,4.21 360.0,3.60 360.5,2.99 361.0,2.47 361.5,2.12 362.0,2.00 362.5,2.12 363.0,2.47 363.5,2.99 364.0,3.60 364.5,4.21 365.0,4.73 365.5,5.08 366.0,5.20 366.5,5.08 367.0,4.73 367.5,4.21 368.0,3.60 368.5,2.99 369.0,2.47 369.5,2.12 370.0,2.00 370.5,2.12 371.0,2.47 371.5,2.99 372.0,3.60 372.5,4.21 373.0,4.73 373.5,5.08 374.0,5.20 374.5,5.08 375.0,4.73 375.5,4.21 376.0,3.60 376.5,2.99 377.0,2.47 377.5,2.12 378.0,2.00 378.5,2.12 379.0,2.47 379.5,2.99 380.0,3.60 380.5,4.21 381.0,4.73 381.5,5.08 382.0,5.20 382.5,5.08 383.0,4.73 383.5,4.21 384.0,3.60 384.5,2.99 385.0,2.47 385.5,2.12 386.0,2.00 386.5,2.12 387.0,2.47 387.5,2.99 388.0,3.60 388.5,4.21 389.0,4.73 389.5,5.08 390.0,5.20 390.5,5.08 391.0,4.73 391.5,4.21 392.0,3.60 392.5,2.99 393.0,2.47 393.5,2.12 394.0,2.00 394.5,2.12 395.0,2.47 395.5,2.99 396.0,3.60 396.5,4.21 397.0,4.73 397.5,5.08 398.0,5.20 398.5,5.08 399.0,4.73 399.5,4.21 400.0,3.60 400.5,2.99 401.0,2.47 401.5,2.12 402.0,2.00 402.5,2.12 403.0,2.47 403.5,2.99 404.0,3.60 404.5,4.21 405.0,4.73 405.5,5.08 406.0,5.20 406.5,5.08 407.0,4.73 407.5,4.21 408.0,3.60 408.5,2.99 409.0,2.47 409.5,2.12 410.0,2.00 410.5,2.12 411.0,2.47 411.5,2.99 412.0,3.60 412.5,4.21 413.0,4.73 413.5,5.08 414.0,5.20 414.5,5.08 415.0,4.73 415.5,4.21 416.0,3.60 416.5,2.99 417.0,2.47 417.5,2.12 418.0,2.00 418.5,2.12 419.0,2.47 419.5,2.99 420.0,3.60 420.5,4.21 421.0,4.73 421.5,5.08 422.0,5.20 422.5,5.08 423.0,4.73 423.5,4.21 424.0,3.60 424.5,2.99 425.0,2.47 425.5,2.12 426.0,2.00 426.5,2.12 427.0,2.47 427.5,2.99 428.0,3.60 428.5,4.21 429.0,4.73 429.5,5.08 430.0,5.20 430.5,5.08 431.0,4.73 431.5,4.21 432.0,3.60 432.5,2.99 433.0,2.47 433.5,2.12 434.0,2.00 434.5,2.12 435.0,2.47 435.5,2.99 436.0,3.60 436.5,4.21 437.0,4.73 437.5,5.08 438.0,5.20 438.5,5.08 439.0,4.73 439.5,4.21 440.0,3.60 440.5,2.99 441.0,2.47 441.5,2.12 442.0,2.00 442.5,2.12 443.0,2.47 443.5,2.99 444.0,3.60 444.5,4.21 445.0,4.73 445.5,5.08 446.0,5.20 446.5,5.08 447.0,4.73 447.5,4.21 448.0,3.60 448.5,2.99 449.0,2.47 449.5,2.12 450.0,2.00 450.5,2.12 451.0,2.47 451.5,2.99 452.0,3.60" fill="none" stroke="#10f010" stroke-width="2.6" stroke-linejoin="round"/></svg>
<svg style="position:absolute;left:1756px;top:55px;" width="26" height="27" viewBox="0 0 26 27"><circle cx="13" cy="15" r="9.5" fill="none" stroke="#5f5d62" stroke-width="3"/><path d="M2 6 L7 2 M24 6 L19 2" stroke="#5f5d62" stroke-width="3.2"/><path d="M9.3 11.3 H16.5 L9.8 18.6 H16.9" fill="none" stroke="#5f5d62" stroke-width="2.8" stroke-linejoin="bevel"/></svg>
<div style="position:absolute;left:2188px;top:52px;width:204px;height:44px;overflow:hidden">
<div class=t style="left:0.5px;top:1.50px;font-family:'Liberation Mono';font-weight:normal;font-size:30px;line-height:45.0px;"><span style="color:#fce566;">button_components</span></div>
</div>
<svg style="position:absolute;left:2192px;top:83.30000000000001px;" width="202" height="7.2" viewBox="0 0 202 7.2"><polyline points="2.0,2.00 2.5,2.12 3.0,2.47 3.5,2.99 4.0,3.60 4.5,4.21 5.0,4.73 5.5,5.08 6.0,5.20 6.5,5.08 7.0,4.73 7.5,4.21 8.0,3.60 8.5,2.99 9.0,2.47 9.5,2.12 10.0,2.00 10.5,2.12 11.0,2.47 11.5,2.99 12.0,3.60 12.5,4.21 13.0,4.73 13.5,5.08 14.0,5.20 14.5,5.08 15.0,4.73 15.5,4.21 16.0,3.60 16.5,2.99 17.0,2.47 17.5,2.12 18.0,2.00 18.5,2.12 19.0,2.47 19.5,2.99 20.0,3.60 20.5,4.21 21.0,4.73 21.5,5.08 22.0,5.20 22.5,5.08 23.0,4.73 23.5,4.21 24.0,3.60 24.5,2.99 25.0,2.47 25.5,2.12 26.0,2.00 26.5,2.12 27.0,2.47 27.5,2.99 28.0,3.60 28.5,4.21 29.0,4.73 29.5,5.08 30.0,5.20 30.5,5.08 31.0,4.73 31.5,4.21 32.0,3.60 32.5,2.99 33.0,2.47 33.5,2.12 34.0,2.00 34.5,2.12 35.0,2.47 35.5,2.99 36.0,3.60 36.5,4.21 37.0,4.73 37.5,5.08 38.0,5.20 38.5,5.08 39.0,4.73 39.5,4.21 40.0,3.60 40.5,2.99 41.0,2.47 41.5,2.12 42.0,2.00 42.5,2.12 43.0,2.47 43.5,2.99 44.0,3.60 44.5,4.21 45.0,4.73 45.5,5.08 46.0,5.20 46.5,5.08 47.0,4.73 47.5,4.21 48.0,3.60 48.5,2.99 49.0,2.47 49.5,2.12 50.0,2.00 50.5,2.12 51.0,2.47 51.5,2.99 52.0,3.60 52.5,4.21 53.0,4.73 53.5,5.08 54.0,5.20 54.5,5.08 55.0,4.73 55.5,4.21 56.0,3.60 56.5,2.99 57.0,2.47 57.5,2.12 58.0,2.00 58.5,2.12 59.0,2.47 59.5,2.99 60.0,3.60 60.5,4.21 61.0,4.73 61.5,5.08 62.0,5.20 62.5,5.08 63.0,4.73 63.5,4.21 64.0,3.60 64.5,2.99 65.0,2.47 65.5,2.12 66.0,2.00 66.5,2.12 67.0,2.47 67.5,2.99 68.0,3.60 68.5,4.21 69.0,4.73 69.5,5.08 70.0,5.20 70.5,5.08 71.0,4.73 71.5,4.21 72.0,3.60 72.5,2.99 73.0,2.47 73.5,2.12 74.0,2.00 74.5,2.12 75.0,2.47 75.5,2.99 76.0,3.60 76.5,4.21 77.0,4.73 77.5,5.08 78.0,5.20 78.5,5.08 79.0,4.73 79.5,4.21 80.0,3.60 80.5,2.99 81.0,2.47 81.5,2.12 82.0,2.00 82.5,2.12 83.0,2.47 83.5,2.99 84.0,3.60 84.5,4.21 85.0,4.73 85.5,5.08 86.0,5.20 86.5,5.08 87.0,4.73 87.5,4.21 88.0,3.60 88.5,2.99 89.0,2.47 89.5,2.12 90.0,2.00 90.5,2.12 91.0,2.47 91.5,2.99 92.0,3.60 92.5,4.21 93.0,4.73 93.5,5.08 94.0,5.20 94.5,5.08 95.0,4.73 95.5,4.21 96.0,3.60 96.5,2.99 97.0,2.47 97.5,2.12 98.0,2.00 98.5,2.12 99.0,2.47 99.5,2.99 100.0,3.60 100.5,4.21 101.0,4.73 101.5,5.08 102.0,5.20 102.5,5.08 103.0,4.73 103.5,4.21 104.0,3.60 104.5,2.99 105.0,2.47 105.5,2.12 106.0,2.00 106.5,2.12 107.0,2.47 107.5,2.99 108.0,3.60 108.5,4.21 109.0,4.73 109.5,5.08 110.0,5.20 110.5,5.08 111.0,4.73 111.5,4.21 112.0,3.60 112.5,2.99 113.0,2.47 113.5,2.12 114.0,2.00 114.5,2.12 115.0,2.47 115.5,2.99 116.0,3.60 116.5,4.21 117.0,4.73 117.5,5.08 118.0,5.20 118.5,5.08 119.0,4.73 119.5,4.21 120.0,3.60 120.5,2.99 121.0,2.47 121.5,2.12 122.0,2.00 122.5,2.12 123.0,2.47 123.5,2.99 124.0,3.60 124.5,4.21 125.0,4.73 125.5,5.08 126.0,5.20 126.5,5.08 127.0,4.73 127.5,4.21 128.0,3.60 128.5,2.99 129.0,2.47 129.5,2.12 130.0,2.00 130.5,2.12 131.0,2.47 131.5,2.99 132.0,3.60 132.5,4.21 133.0,4.73 133.5,5.08 134.0,5.20 134.5,5.08 135.0,4.73 135.5,4.21 136.0,3.60 136.5,2.99 137.0,2.47 137.5,2.12 138.0,2.00 138.5,2.12 139.0,2.47 139.5,2.99 140.0,3.60 140.5,4.21 141.0,4.73 141.5,5.08 142.0,5.20 142.5,5.08 143.0,4.73 143.5,4.21 144.0,3.60 144.5,2.99 145.0,2.47 145.5,2.12 146.0,2.00 146.5,2.12 147.0,2.47 147.5,2.99 148.0,3.60 148.5,4.21 149.0,4.73 149.5,5.08 150.0,5.20 150.5,5.08 151.0,4.73 151.5,4.21 152.0,3.60 152.5,2.99 153.0,2.47 153.5,2.12 154.0,2.00 154.5,2.12 155.0,2.47 155.5,2.99 156.0,3.60 156.5,4.21 157.0,4.73 157.5,5.08 158.0,5.20 158.5,5.08 159.0,4.73 159.5,4.21 160.0,3.60 160.5,2.99 161.0,2.47 161.5,2.12 162.0,2.00 162.5,2.12 163.0,2.47 163.5,2.99 164.0,3.60 164.5,4.21 165.0,4.73 165.5,5.08 166.0,5.20 166.5,5.08 167.0,4.73 167.5,4.21 168.0,3.60 168.5,2.99 169.0,2.47 169.5,2.12 170.0,2.00 170.5,2.12 171.0,2.47 171.5,2.99 172.0,3.60 172.5,4.21 173.0,4.73 173.5,5.08 174.0,5.20 174.5,5.08 175.0,4.73 175.5,4.21 176.0,3.60 176.5,2.99 177.0,2.47 177.5,2.12 178.0,2.00 178.5,2.12 179.0,2.47 179.5,2.99 180.0,3.60 180.5,4.21 181.0,4.73 181.5,5.08 182.0,5.20 182.5,5.08 183.0,4.73 183.5,4.21 184.0,3.60 184.5,2.99 185.0,2.47 185.5,2.12 186.0,2.00 186.5,2.12 187.0,2.47 187.5,2.99 188.0,3.60 188.5,4.21 189.0,4.73 189.5,5.08 190.0,5.20 190.5,5.08 191.0,4.73 191.5,4.21 192.0,3.60 192.5,2.99 193.0,2.47 193.5,2.12 194.0,2.00 194.5,2.12 195.0,2.47 195.5,2.99 196.0,3.60 196.5,4.21 197.0,4.73 197.5,5.08 198.0,5.20 198.5,5.08 199.0,4.73 199.5,4.21 200.0,3.60" fill="none" stroke="#10f010" stroke-width="2.6" stroke-linejoin="round"/></svg>
<div style="position:absolute;left:1788px;top:48px;width:406px;height:76px;background:#222222;"></div>
<svg style="position:absolute;left:1800px;top:60px;" width="60" height="50" viewBox="0 0 60 50"><rect x="10" y="8.5" width="6" height="35" fill="#6cb8f6"/><path d="M22.4 12 L41.5 26 L22.4 40 Z" fill="none" stroke="#6cb8f6" stroke-width="4.6" stroke-linejoin="miter"/></svg>
<svg style="position:absolute;left:1866px;top:60px;" width="52" height="50" viewBox="0 0 52 50"><path d="M11 27 C 15 13, 33 9, 40 20" fill="none" stroke="#6cb8f6" stroke-width="4.8"/><path d="M41.5 8 V23 H27" fill="none" stroke="#6cb8f6" stroke-width="4.8"/><circle cx="26" cy="36.5" r="6" fill="#6cb8f6"/></svg>
<svg style="position:absolute;left:1934px;top:60px;" width="48" height="50" viewBox="0 0 48 50"><path d="M24 8 V30.5" stroke="#6cb8f6" stroke-width="4.6"/><path d="M14.5 19 L24 8.5 L33.5 19" fill="none" stroke="#6cb8f6" stroke-width="4.6"/><circle cx="24" cy="39.8" r="6" fill="#6cb8f6"/></svg>
<svg style="position:absolute;left:2000px;top:60px;" width="48" height="50" viewBox="0 0 48 50"><path d="M24 6 V29" stroke="#6cb8f6" stroke-width="4.6"/><path d="M14.5 18 L24 28 L33.5 18" fill="none" stroke="#6cb8f6" stroke-width="4.6"/><circle cx="24" cy="39.8" r="6" fill="#6cb8f6"/></svg>
<svg style="position:absolute;left:2066px;top:60px;" width="48" height="48" viewBox="0 0 48 48"><g fill="none" stroke="#ec8a6e" stroke-width="2.7" stroke-linejoin="round"><path d="M25 10.5 L38 9 L38 20 L33 26 L23 16 Z"/><path d="M38 9 L41.5 6.5"/><path d="M9 28 L19 21 L27 28 L20 39 L10 40 Z"/><path d="M10 40 L6 44"/><path d="M17 22 L21 18 M23 26 L27 22"/></g></svg>
<svg style="position:absolute;left:2128px;top:56px;" width="56" height="52" viewBox="0 0 56 52"><path d="M21.15 19.7 A13.2 13.2 0 1 1 16.94 35.67" fill="none" stroke="#7fd98c" stroke-width="3.7"/><path d="M12 14 L12 28 L24 28 Z" fill="#7fd98c"/></svg>
<div style="position:absolute;left:872px;top:791px;width:8px;height:33px;background:#fce566;"></div>
<svg style="position:absolute;left:894px;top:805px;" width="13" height="14" viewBox="0 0 13 14"><path d="M3 1 L9 1 L12 7 L9 13 L3 13 L0 7 Z" fill="#a05f2a"/></svg>
<div class=t style="left:910px;top:795.40px;font-family:'Liberation Mono';font-weight:bold;font-size:20px;line-height:30.0px;"><span style="color:#f7f1ff;">text_icon_rounded_button_component.dart</span></div>
<div class=t style="left:1394px;top:799.40px;font-family:'Liberation Mono';font-weight:normal;font-size:16px;line-height:24.0px;"><span style="color:#f7f1ff;">L92 71%</span></div>
<svg style="position:absolute;left:1579px;top:800px;" width="20" height="20" viewBox="0 0 20 20"><path d="M3 17 L8 12 M6 9 Q 12 1 18 2 Q 19 8 11 14 Z M6 9 L3 9 L1 12 M11 14 L11 17 L8 19" fill="none" stroke="#a86b33" stroke-width="2.2"/></svg>
<svg style="position:absolute;left:1603px;top:801px;" width="19" height="19" viewBox="0 0 19 19"><path d="M15.39 7.58 L17.86 7.49 L17.86 11.51 L15.39 11.42 L14.11 13.64 L15.42 15.74 L11.94 17.75 L10.78 15.57 L8.22 15.57 L7.06 17.75 L3.58 15.74 L4.89 13.64 L3.61 11.42 L1.14 11.51 L1.14 7.49 L3.61 7.58 L4.89 5.36 L3.58 3.26 L7.06 1.25 L8.22 3.43 L10.78 3.43 L11.94 1.25 L15.42 3.26 L14.11 5.36 Z" fill="none" stroke="#a86b33" stroke-width="1.8" stroke-linejoin="round"/><circle cx="9.5" cy="9.5" r="2.6" fill="none" stroke="#a86b33" stroke-width="1.8"/></svg>
<div class=t style="left:1630px;top:799.40px;font-family:'Liberation Sans';font-weight:normal;font-size:15px;line-height:22.5px;"><span style="color:#f7f1ff;">SPC 2</span></div>
<div class=t style="left:1687px;top:799.40px;font-family:'Liberation Sans';font-weight:normal;font-size:15px;line-height:22.5px;"><span style="color:#f7f1ff;">LF UTF-8</span></div>
<div class=t style="left:1768px;top:799.40px;font-family:'Liberation Mono';font-weight:bold;font-size:16px;line-height:24.0px;"><span style="color:#a86b33;">Dart</span></div>
<svg style="position:absolute;left:1824px;top:803px;" width="12" height="16" viewBox="0 0 12 16"><path d="M2 3 V13 M10 3 V13 M2 3 L5 1 M10 13 L7 15" fill="none" stroke="#a86b33" stroke-width="2"/></svg>
<div class=t style="left:1839px;top:796.40px;font-family:'Liberation Mono';font-weight:bold;font-size:19.5px;line-height:29.25px;"><span style="color:#a86b33;">feature/u…</span></div>
<div style="position:absolute;left:1974px;top:798px;width:20px;height:24px;background:transparent;box-sizing:border-box;border:2px solid #a86b33"></div>
<div class=t style="left:1977px;top:800.00px;font-family:'Liberation Sans';font-weight:normal;font-size:8px;line-height:12.0px;"><span style="color:#a86b33;">0F0</span></div>
<div class=t style="left:1977px;top:810.00px;font-family:'Liberation Sans';font-weight:normal;font-size:8px;line-height:12.0px;"><span style="color:#a86b33;">5D8</span></div>
<div class=t style="left:2001px;top:796.40px;font-family:'Liberation Mono';font-weight:normal;font-size:19px;line-height:28.5px;"><span style="color:#a86b33;">1</span></div>
<svg style="position:absolute;left:2414px;top:68.3px;" width="14" height="14" viewBox="0 0 14 14"><path d="M0.5 0.5 L13 6.8 L0.5 13 Z" fill="#f3eefa"/></svg>
<div class=t style="left:2453.0px;top:48.80px;font-family:'Liberation Mono';font-weight:normal;font-size:36.67px;line-height:55.005px;"><span style="color:#f7f1ff;">Locals</span></div>
<svg style="position:absolute;left:2414px;top:114.6px;" width="14" height="14" viewBox="0 0 14 14"><path d="M0.5 0.5 L13 6.8 L0.5 13 Z" fill="#f3eefa"/></svg>
<div class=t style="left:2453.0px;top:95.10px;font-family:'Liberation Mono';font-weight:normal;font-size:36.67px;line-height:55.005px;"><span style="color:#f7f1ff;">Globals</span></div>
<div style="position:absolute;left:2392px;top:274px;width:8px;height:32px;background:#f3eefa;"></div>
<div class=t style="left:2465.5px;top:272.90px;font-family:'Liberation Mono';font-weight:bold;font-size:26.67px;line-height:40.005px;"><span style="color:#f7f1ff;">Locals</span></div>
<div class=t style="left:3376px;top:272.90px;font-family:'Liberation Mono';font-weight:normal;font-size:26.67px;line-height:40.005px;"><span style="color:#f7f1ff;">Default</span></div>
<div class=t style="left:2453.0px;top:306.70px;font-family:'Liberation Mono';font-weight:normal;font-size:36.67px;line-height:55.005px;"><span style="color:#f7f1ff;">message: </span><span style="color:#fc618d;">[Sentinel kind: OptimizedOut, valueAs</span></div>
<div class=t style="left:2409px;top:353.00px;font-family:'Liberation Mono';font-weight:normal;font-size:36.67px;line-height:55.005px;"><span style="color:#fc618d;">String: &lt;optimized out&gt;] from evaluateInFrame()</span></div>
<svg style="position:absolute;left:3490px;top:330px;" width="14" height="16" viewBox="0 0 14 16"><path d="M1 4 H10 V12 H1" fill="none" stroke="#5f5d62" stroke-width="3"/></svg>
<svg style="position:absolute;left:2393px;top:369px;" width="14" height="18" viewBox="0 0 14 18"><path d="M13 4 H3 V13 H13" fill="none" stroke="#5f5d62" stroke-width="3"/></svg>
<div style="position:absolute;left:2392px;top:530px;width:8px;height:32px;background:#f3eefa;"></div>
<div class=t style="left:2465.5px;top:529.30px;font-family:'Liberation Mono';font-weight:bold;font-size:26.67px;line-height:40.005px;"><span style="color:#f7f1ff;">Expressions</span></div>
<div class=t style="left:3376px;top:529.30px;font-family:'Liberation Mono';font-weight:normal;font-size:26.67px;line-height:40.005px;"><span style="color:#f7f1ff;">Default</span></div>
<div style="position:absolute;left:2412px;top:566px;width:1076px;height:46px;background:#363537;"></div>
<div style="position:absolute;left:2394px;top:562px;width:1116px;height:225px;overflow:hidden">
<div class=t style="left:63.5px;top:0.50px;font-family:'Liberation Mono';font-weight:normal;font-size:36.67px;line-height:55.005px;"><span style="color:#5b595e;">Flutter :: Debug</span></div>
<div class=t style="left:63.5px;top:46.50px;font-family:'Liberation Mono';font-weight:normal;font-size:36.67px;line-height:55.005px;"><span style="color:#5b595e;">Flutter :: Debug&lt;1&gt;</span></div>
<div class=t style="left:63.5px;top:92.50px;font-family:'Liberation Mono';font-weight:normal;font-size:36.67px;line-height:55.005px;"><span style="color:#5b595e;">Flutter :: Debug&lt;2&gt;</span></div>
<div class=t style="left:63.5px;top:138.50px;font-family:'Liberation Mono';font-weight:normal;font-size:36.67px;line-height:55.005px;"><span style="color:#5b595e;">Flutter :: Debug&lt;3&gt;</span></div>
<div class=t style="left:63.5px;top:184.50px;font-family:'Liberation Mono';font-weight:normal;font-size:36.67px;line-height:55.005px;"><span style="color:#5b595e;">Flutter :: Debug&lt;4&gt;</span></div>
</div>
<div style="position:absolute;left:2392px;top:788px;width:8px;height:32px;background:#f3eefa;"></div>
<div class=t style="left:2465.5px;top:787.40px;font-family:'Liberation Mono';font-weight:bold;font-size:26.67px;line-height:40.005px;"><span style="color:#f7f1ff;">Debug Sessions</span></div>
<div class=t style="left:3376px;top:787.40px;font-family:'Liberation Mono';font-weight:normal;font-size:26.67px;line-height:40.005px;"><span style="color:#f7f1ff;">Default</span></div>
<div style="position:absolute;left:2396.5px;top:247px;width:1106.5px;height:179px;background:transparent;box-sizing:border-box;border:2.5px solid #f39a1e"></div>
<div class=t style="left:12px;top:820.50px;font-family:'Liberation Mono';font-weight:normal;font-size:36.67px;line-height:55.005px;"><span style="color:#f7f1ff;">[GETX] Instance "UserController" has been initialized</span></div>
<div class=t style="left:12px;top:866.50px;font-family:'Liberation Mono';font-weight:normal;font-size:36.67px;line-height:55.005px;"><span style="color:#f7f1ff;">[GETX] Instance "GetMaterialController" has been created</span></div>
<div class=t style="left:12px;top:912.50px;font-family:'Liberation Mono';font-weight:normal;font-size:36.67px;line-height:55.005px;"><span style="color:#f7f1ff;">[GETX] Instance "GetMaterialController" has been initialized</span></div>
<div style="position:absolute;left:12px;top:962.5px;width:22px;height:45px;background:transparent;box-sizing:border-box;border:2px solid #f3eefa"></div>
<svg style="position:absolute;left:31px;top:1124px;" width="18" height="25" viewBox="0 0 18 25"><path d="M17 2 A 11 11 0 1 0 17 23 Z" fill="#a86b33"/><path d="M16 6 L7 10 L15 13 L6 16 L16 19" fill="none" stroke="#2a1a0c" stroke-width="1.8"/></svg>
<div style="position:absolute;left:56px;top:1118px;width:32px;height:35px;background:transparent;box-sizing:border-box;border:2px solid #a86b33"></div>
<div class=t style="left:59px;top:1118.00px;font-family:'Liberation Sans';font-weight:normal;font-size:14.5px;line-height:21.75px;"><span style="color:#a86b33;">0F0</span></div>
<div class=t style="left:59px;top:1134.00px;font-family:'Liberation Sans';font-weight:normal;font-size:14.5px;line-height:21.75px;"><span style="color:#a86b33;">33E</span></div>
<div class=t style="left:95.5px;top:1118.70px;font-family:'Liberation Mono';font-weight:bold;font-size:26.67px;line-height:40.005px;"><span style="color:#f7f1ff;">*Flutter :: Debug&lt;5&gt; out*</span></div>
<div class=t style="left:529px;top:1118.70px;font-family:'Liberation Mono';font-weight:normal;font-size:26.67px;line-height:40.005px;"><span style="color:#f7f1ff;">L8 Bot</span></div>
<svg style="position:absolute;left:3057px;top:1123px;" width="26" height="27" viewBox="0 0 26 27"><path d="M20.39 10.92 L23.68 10.82 L23.68 16.18 L20.39 16.08 L18.68 19.04 L20.42 21.84 L15.77 24.53 L14.21 21.62 L10.79 21.62 L9.23 24.53 L4.58 21.84 L6.32 19.04 L4.61 16.08 L1.32 16.18 L1.32 10.82 L4.61 10.92 L6.32 7.96 L4.58 5.16 L9.23 2.47 L10.79 5.38 L14.21 5.38 L15.77 2.47 L20.42 5.16 L18.68 7.96 Z" fill="none" stroke="#a86b33" stroke-width="2.6" stroke-linejoin="round"/><circle cx="12.5" cy="13.5" r="3.6" fill="none" stroke="#a86b33" stroke-width="2.6"/></svg>
<div class=t style="left:3104px;top:1118.70px;font-family:'Liberation Mono';font-weight:normal;font-size:26.67px;line-height:40.005px;"><span style="color:#f7f1ff;">TAB 8</span></div>
<div class=t style="left:3218px;top:1118.70px;font-family:'Liberation Mono';font-weight:normal;font-size:26.67px;line-height:40.005px;"><span style="color:#f7f1ff;">LF UTF-8</span></div>
<div class=t style="left:3376px;top:1118.70px;font-family:'Liberation Mono';font-weight:bold;font-size:26.67px;line-height:40.005px;"><span style="color:#f7f1ff;">Special</span></div>
<div class=t style="left:12.0px;top:1152.50px;font-family:'Liberation Mono';font-weight:normal;font-size:36.67px;line-height:55.005px;"><span style="color:#f7f1ff;">Stepping</span></div>
<div class=t style="left:408.0px;top:1152.50px;font-family:'Liberation Mono';font-weight:normal;font-size:36.67px;line-height:55.005px;"><span style="color:#f7f1ff;">Switch</span></div>
<div class=t style="left:914.0px;top:1152.50px;font-family:'Liberation Mono';font-weight:normal;font-size:36.67px;line-height:55.005px;"><span style="color:#f7f1ff;">Breakpoints</span></div>
<div class=t style="left:1354.0px;top:1152.50px;font-family:'Liberation Mono';font-weight:normal;font-size:36.67px;line-height:55.005px;"><span style="color:#f7f1ff;">Debug</span></div>
<div class=t style="left:1926.0px;top:1152.50px;font-family:'Liberation Mono';font-weight:normal;font-size:36.67px;line-height:55.005px;"><span style="color:#f7f1ff;">Eval</span></div>
<div style="position:absolute;left:15px;top:1222.3px;width:2460px;height:3.4px;background:transparent;background:repeating-linear-gradient(90deg,#f7f1ff 0 16px,transparent 16px 22px)"></div>
<div class=t style="left:12.0px;top:1244.50px;font-family:'Liberation Mono';font-weight:normal;font-size:36.67px;line-height:55.005px;"><span style="color:#948ae3;font-weight:bold">n</span><span style="color:#f7f1ff;">: Next</span></div>
<div class=t style="left:12.0px;top:1290.50px;font-family:'Liberation Mono';font-weight:normal;font-size:36.67px;line-height:55.005px;"><span style="color:#948ae3;font-weight:bold">i</span><span style="color:#f7f1ff;">: Step in</span></div>
<div class=t style="left:12.0px;top:1336.50px;font-family:'Liberation Mono';font-weight:normal;font-size:36.67px;line-height:55.005px;"><span style="color:#948ae3;font-weight:bold">o</span><span style="color:#f7f1ff;">: Step out</span></div>
<div class=t style="left:12.0px;top:1382.50px;font-family:'Liberation Mono';font-weight:normal;font-size:36.67px;line-height:55.005px;"><span style="color:#948ae3;font-weight:bold">c</span><span style="color:#f7f1ff;">: Continue</span></div>
<div class=t style="left:12.0px;top:1428.50px;font-family:'Liberation Mono';font-weight:normal;font-size:36.67px;line-height:55.005px;"><span style="color:#948ae3;font-weight:bold">r</span><span style="color:#f7f1ff;">: Restart frame</span></div>
<div class=t style="left:12.0px;top:1474.50px;font-family:'Liberation Mono';font-weight:normal;font-size:36.67px;line-height:55.005px;"><span style="color:#948ae3;font-weight:bold">Q</span><span style="color:#f7f1ff;">: Disconnect</span></div>
<div class=t style="left:408.0px;top:1244.50px;font-family:'Liberation Mono';font-weight:normal;font-size:36.67px;line-height:55.005px;"><span style="color:#948ae3;font-weight:bold">ss</span><span style="color:#f7f1ff;">: Session</span></div>
<div class=t style="left:408.0px;top:1290.50px;font-family:'Liberation Mono';font-weight:normal;font-size:36.67px;line-height:55.005px;"><span style="color:#948ae3;font-weight:bold">st</span><span style="color:#f7f1ff;">: Thread</span></div>
<div class=t style="left:408.0px;top:1336.50px;font-family:'Liberation Mono';font-weight:normal;font-size:36.67px;line-height:55.005px;"><span style="color:#948ae3;font-weight:bold">sf</span><span style="color:#f7f1ff;">: Stack frame</span></div>
<div class=t style="left:408.0px;top:1382.50px;font-family:'Liberation Mono';font-weight:normal;font-size:36.67px;line-height:55.005px;"><span style="color:#948ae3;font-weight:bold">su</span><span style="color:#f7f1ff;">: Up stack frame</span></div>
<div class=t style="left:408.0px;top:1428.50px;font-family:'Liberation Mono';font-weight:normal;font-size:36.67px;line-height:55.005px;"><span style="color:#948ae3;font-weight:bold">sd</span><span style="color:#f7f1ff;">: Down stack frame</span></div>
<div class=t style="left:408.0px;top:1474.50px;font-family:'Liberation Mono';font-weight:normal;font-size:36.67px;line-height:55.005px;"><span style="color:#948ae3;font-weight:bold">sl</span><span style="color:#f7f1ff;">: List locals</span></div>
<div class=t style="left:408.0px;top:1520.50px;font-family:'Liberation Mono';font-weight:normal;font-size:36.67px;line-height:55.005px;"><span style="color:#948ae3;font-weight:bold">sb</span><span style="color:#f7f1ff;">: List breakpoints</span></div>
<div class=t style="left:408.0px;top:1566.50px;font-family:'Liberation Mono';font-weight:normal;font-size:36.67px;line-height:55.005px;"><span style="color:#948ae3;font-weight:bold">sS</span><span style="color:#f7f1ff;">: List sessions</span></div>
<div class=t style="left:914.0px;top:1244.50px;font-family:'Liberation Mono';font-weight:normal;font-size:36.67px;line-height:55.005px;"><span style="color:#948ae3;font-weight:bold">bb</span><span style="color:#f7f1ff;">: Toggle</span></div>
<div class=t style="left:914.0px;top:1290.50px;font-family:'Liberation Mono';font-weight:normal;font-size:36.67px;line-height:55.005px;"><span style="color:#948ae3;font-weight:bold">bd</span><span style="color:#f7f1ff;">: Delete</span></div>
<div class=t style="left:914.0px;top:1336.50px;font-family:'Liberation Mono';font-weight:normal;font-size:36.67px;line-height:55.005px;"><span style="color:#948ae3;font-weight:bold">ba</span><span style="color:#f7f1ff;">: Add</span></div>
<div class=t style="left:914.0px;top:1382.50px;font-family:'Liberation Mono';font-weight:normal;font-size:36.67px;line-height:55.005px;"><span style="color:#948ae3;font-weight:bold">bc</span><span style="color:#f7f1ff;">: Set condition</span></div>
<div class=t style="left:914.0px;top:1428.50px;font-family:'Liberation Mono';font-weight:normal;font-size:36.67px;line-height:55.005px;"><span style="color:#948ae3;font-weight:bold">bh</span><span style="color:#f7f1ff;">: Set hit count</span></div>
<div class=t style="left:914.0px;top:1474.50px;font-family:'Liberation Mono';font-weight:normal;font-size:36.67px;line-height:55.005px;"><span style="color:#948ae3;font-weight:bold">bl</span><span style="color:#f7f1ff;">: Set log message</span></div>
<div class=t style="left:1354.0px;top:1244.50px;font-family:'Liberation Mono';font-weight:normal;font-size:36.67px;line-height:55.005px;"><span style="color:#948ae3;font-weight:bold">dd</span><span style="color:#f7f1ff;">: Debug</span></div>
<div class=t style="left:1354.0px;top:1290.50px;font-family:'Liberation Mono';font-weight:normal;font-size:36.67px;line-height:55.005px;"><span style="color:#948ae3;font-weight:bold">dr</span><span style="color:#f7f1ff;">: Debug recent</span></div>
<div class=t style="left:1354.0px;top:1336.50px;font-family:'Liberation Mono';font-weight:normal;font-size:36.67px;line-height:55.005px;"><span style="color:#948ae3;font-weight:bold">dl</span><span style="color:#f7f1ff;">: Debug last</span></div>
<div class=t style="left:1354.0px;top:1382.50px;font-family:'Liberation Mono';font-weight:normal;font-size:36.67px;line-height:55.005px;"><span style="color:#948ae3;font-weight:bold">de</span><span style="color:#f7f1ff;">: Edit debug template</span></div>
<div class=t style="left:1354.0px;top:1428.50px;font-family:'Liberation Mono';font-weight:normal;font-size:36.67px;line-height:55.005px;"><span style="color:#948ae3;font-weight:bold">ds</span><span style="color:#f7f1ff;">: Debug restart</span></div>
<div class=t style="left:1926.0px;top:1244.50px;font-family:'Liberation Mono';font-weight:normal;font-size:36.67px;line-height:55.005px;"><span style="color:#948ae3;font-weight:bold">ee</span><span style="color:#f7f1ff;">: Eval</span></div>
<div class=t style="left:1926.0px;top:1290.50px;font-family:'Liberation Mono';font-weight:normal;font-size:36.67px;line-height:55.005px;"><span style="color:#948ae3;font-weight:bold">er</span><span style="color:#f7f1ff;">: Eval region</span></div>
<div class=t style="left:1926.0px;top:1336.50px;font-family:'Liberation Mono';font-weight:normal;font-size:36.67px;line-height:55.005px;"><span style="color:#948ae3;font-weight:bold">es</span><span style="color:#f7f1ff;">: Eval thing at point</span></div>
<div class=t style="left:1926.0px;top:1382.50px;font-family:'Liberation Mono';font-weight:normal;font-size:36.67px;line-height:55.005px;"><span style="color:#948ae3;font-weight:bold">ea</span><span style="color:#f7f1ff;">: Add expression.</span></div>
<div class=t style="left:12px;top:1612.50px;font-family:'Liberation Mono';font-weight:normal;font-size:36.67px;line-height:55.005px;"><span style="color:#f7f1ff;">[</span><span style="color:#5ad4e6;font-weight:bold">q</span><span style="color:#f7f1ff;">]: quit.</span></div>
<svg style="position:absolute;left:2262px;top:425px;" width="230" height="155" viewBox="0 0 230 155"><path d="M9.6 141.5 L185.8 20.3 L178.3 14.2 L217.3 10.3 L197.5 43.6 L194.7 35.4 L12 145.5 Q 8 146 9.6 141.5 Z" fill="#f7931e" style="filter:drop-shadow(0 1px 1.5px rgba(0,0,0,.6))"/></svg>
<svg style="position:absolute;left:2193px;top:585.4px;overflow:visible;filter:drop-shadow(1px 1.5px 1.5px rgba(0,0,0,.6))" width="478" height="60" viewBox="0 -40 478 60"><g stroke-linejoin="round"><g transform="translate(102.21,-26.00) scale(0.96,1)"><g fill="none" stroke="#000" stroke-width="7.2540000000000004" stroke-linejoin="round"><path d="M1.1 12.9 L26.4 12.9 M6.7 18.7 L20.1 18.7 L20.1 22.5 L7.4 22.5 L7.4 26.5 L21.5 26.5"/><ellipse cx="13.8" cy="5.0" rx="5.9" ry="4.4"/></g></g><g transform="translate(138.32,-26.00) scale(0.96,1)"><g fill="none" stroke="#000" stroke-width="9.3" stroke-linejoin="round"><path d="M2.2 5.5 L8.0 5.5 L7.9 15.1 L6.3 24.1 M9.7 5.5 L15.5 5.5 L15.3 15.1 L13.7 24.1 M19.0 0.0 L19.0 28.0 M19.0 13.4 L24.5 13.4"/></g></g><g transform="translate(165.82,-26.00) scale(0.96,1)"><g fill="none" stroke="#000" stroke-width="9.3" stroke-linejoin="round"><path d="M7.1 1.7 L7.1 13.2 L20.4 13.2 L20.4 1.7 M7.1 7.4 L20.4 7.4 M13.7 15.2 L13.7 20.8 M1.1 20.8 L26.4 20.8"/></g></g><g transform="translate(193.32,-26.00) scale(0.96,1)"><g fill="none" stroke="#000" stroke-width="9.3" stroke-linejoin="round"><path d="M3.4 3.7 L3.4 22.5 L15.6 22.5 M20.6 0.0 L20.6 28.0"/></g></g><g transform="translate(331.09,-26.00) scale(0.96,1)"><g fill="none" stroke="#000" stroke-width="9.3" stroke-linejoin="round"><path d="M15.1 1.5 L3.9 1.5 L3.9 8.4 L15.6 8.4 M10.4 9.3 L10.4 13.3 M1.1 13.3 L19.8 13.3 M21.4 0.0 L21.4 17.4 M6.7 18.8 L6.7 26.4 L22.5 26.4"/></g></g><g transform="translate(358.59,-26.00) scale(0.96,1)"><g fill="none" stroke="#000" stroke-width="9.3" stroke-linejoin="round"><path d="M2.8 5.5 L14.4 5.5 L14.1 15.1 L10.9 24.1 M22.3 0.0 L22.3 28.0 M16.2 13.4 L22.3 13.4"/></g></g><g transform="translate(394.70,-26.00) scale(0.96,1)"><g fill="none" stroke="#000" stroke-width="7.2540000000000004" stroke-linejoin="round"><path d="M2.8 2.7 L13.9 2.7 L13.7 8.2 L10.5 13.4 M19.0 0.0 L19.0 16.2 M19.0 7.8 L24.5 7.8 M21.3 18.4 L6.7 18.4 L6.7 26.4 L22.1 26.4 M6.7 22.4 L20.8 22.4"/></g></g><g transform="translate(422.20,-26.00) scale(0.96,1)"><g fill="none" stroke="#000" stroke-width="9.3" stroke-linejoin="round"><path d="M15.0 5.0 L3.4 5.0 L3.4 22.5 L15.6 22.5 M19.0 0.0 L19.0 28.0 M19.0 13.4 L24.5 13.4"/></g></g><text x="0.00" y="0" style="font-family:'Liberation Sans';font-weight:bold;font-size:31px;font-kerning:none;white-space:pre" fill="#000" stroke="#000" stroke-width="5.0" stroke-linejoin="round" xml:space="preserve">Socket</text><text x="129.16" y="0" style="font-family:'Liberation Sans';font-weight:bold;font-size:31px;font-kerning:none;white-space:pre" fill="#000" stroke="#000" stroke-width="5.0" stroke-linejoin="round" xml:space="preserve"> </text><text x="220.27" y="0" style="font-family:'Liberation Sans';font-weight:bold;font-size:31px;font-kerning:none;white-space:pre" fill="#000" stroke="#000" stroke-width="5.0" stroke-linejoin="round" xml:space="preserve">, refuse</text><text x="385.54" y="0" style="font-family:'Liberation Sans';font-weight:bold;font-size:31px;font-kerning:none;white-space:pre" fill="#000" stroke="#000" stroke-width="5.0" stroke-linejoin="round" xml:space="preserve"> </text><text x="449.15" y="0" style="font-family:'Liberation Sans';font-weight:bold;font-size:31px;font-kerning:none;white-space:pre" fill="#000" stroke="#000" stroke-width="5.0" stroke-linejoin="round" xml:space="preserve">.</text></g><g transform="translate(102.21,-26.00) scale(0.96,1)"><g fill="none" stroke="#ff9a1e" stroke-width="3.354" stroke-linejoin="round"><path d="M1.1 12.9 L26.4 12.9 M6.7 18.7 L20.1 18.7 L20.1 22.5 L7.4 22.5 L7.4 26.5 L21.5 26.5"/><ellipse cx="13.8" cy="5.0" rx="5.9" ry="3.2"/></g></g><g transform="translate(138.32,-26.00) scale(0.96,1)"><g fill="none" stroke="#ff9a1e" stroke-width="4.3" stroke-linejoin="round"><path d="M2.2 5.5 L8.0 5.5 L7.9 15.1 L6.3 24.1 M9.7 5.5 L15.5 5.5 L15.3 15.1 L13.7 24.1 M19.0 0.0 L19.0 28.0 M19.0 13.4 L24.5 13.4"/></g></g><g transform="translate(165.82,-26.00) scale(0.96,1)"><g fill="none" stroke="#ff9a1e" stroke-width="4.3" stroke-linejoin="round"><path d="M7.1 1.7 L7.1 13.2 L20.4 13.2 L20.4 1.7 M7.1 7.4 L20.4 7.4 M13.7 15.2 L13.7 20.8 M1.1 20.8 L26.4 20.8"/></g></g><g transform="translate(193.32,-26.00) scale(0.96,1)"><g fill="none" stroke="#ff9a1e" stroke-width="4.3" stroke-linejoin="round"><path d="M3.4 3.7 L3.4 22.5 L15.6 22.5 M20.6 0.0 L20.6 28.0"/></g></g><g transform="translate(331.09,-26.00) scale(0.96,1)"><g fill="none" stroke="#ff9a1e" stroke-width="4.3" stroke-linejoin="round"><path d="M15.1 1.5 L3.9 1.5 L3.9 8.4 L15.6 8.4 M10.4 9.3 L10.4 13.3 M1.1 13.3 L19.8 13.3 M21.4 0.0 L21.4 17.4 M6.7 18.8 L6.7 26.4 L22.5 26.4"/></g></g><g transform="translate(358.59,-26.00) scale(0.96,1)"><g fill="none" stroke="#ff9a1e" stroke-width="4.3" stroke-linejoin="round"><path d="M2.8 5.5 L14.4 5.5 L14.1 15.1 L10.9 24.1 M22.3 0.0 L22.3 28.0 M16.2 13.4 L22.3 13.4"/></g></g><g transform="translate(394.70,-26.00) scale(0.96,1)"><g fill="none" stroke="#ff9a1e" stroke-width="3.354" stroke-linejoin="round"><path d="M2.8 2.7 L13.9 2.7 L13.7 8.2 L10.5 13.4 M19.0 0.0 L19.0 16.2 M19.0 7.8 L24.5 7.8 M21.3 18.4 L6.7 18.4 L6.7 26.4 L22.1 26.4 M6.7 22.4 L20.8 22.4"/></g></g><g transform="translate(422.20,-26.00) scale(0.96,1)"><g fill="none" stroke="#ff9a1e" stroke-width="4.3" stroke-linejoin="round"><path d="M15.0 5.0 L3.4 5.0 L3.4 22.5 L15.6 22.5 M19.0 0.0 L19.0 28.0 M19.0 13.4 L24.5 13.4"/></g></g><text x="0.00" y="0" style="font-family:'Liberation Sans';font-weight:bold;font-size:31px;font-kerning:none;white-space:pre" fill="#ff9a1e" stroke="#ff9a1e" stroke-width="0.8" xml:space="preserve">Socket</text><text x="129.16" y="0" style="font-family:'Liberation Sans';font-weight:bold;font-size:31px;font-kerning:none;white-space:pre" fill="#ff9a1e" stroke="#ff9a1e" stroke-width="0.8" xml:space="preserve"> </text><text x="220.27" y="0" style="font-family:'Liberation Sans';font-weight:bold;font-size:31px;font-kerning:none;white-space:pre" fill="#ff9a1e" stroke="#ff9a1e" stroke-width="0.8" xml:space="preserve">, refuse</text><text x="385.54" y="0" style="font-family:'Liberation Sans';font-weight:bold;font-size:31px;font-kerning:none;white-space:pre" fill="#ff9a1e" stroke="#ff9a1e" stroke-width="0.8" xml:space="preserve"> </text><text x="449.15" y="0" style="font-family:'Liberation Sans';font-weight:bold;font-size:31px;font-kerning:none;white-space:pre" fill="#ff9a1e" stroke="#ff9a1e" stroke-width="0.8" xml:space="preserve">.</text></svg>
<svg style="position:absolute;left:2193px;top:627.8px;overflow:visible;filter:drop-shadow(1px 1.5px 1.5px rgba(0,0,0,.6))" width="975" height="60" viewBox="0 -40 975 60"><g stroke-linejoin="round"><g transform="translate(133.24,-26.00) scale(0.96,1)"><g fill="none" stroke="#000" stroke-width="9.3" stroke-linejoin="round"><path d="M7.3 0.9 L7.3 8.4 L20.6 8.4 M1.1 12.9 L25.9 12.9 M6.9 18.3 L6.9 26.3 L21.1 26.3"/></g></g><g transform="translate(168.86,-26.00) scale(0.96,1)"><g fill="none" stroke="#000" stroke-width="9.3" stroke-linejoin="round"><path d="M20.2 0.0 L20.2 28.0"/><ellipse cx="8.9" cy="14.0" rx="5.6" ry="8.1"/></g></g><g transform="translate(195.86,-26.00) scale(0.96,1)"><g fill="none" stroke="#000" stroke-width="9.3" stroke-linejoin="round"><path d="M8.6 1.6 L8.1 6.5 L2.7 13.4 M8.4 6.5 L14.5 13.4 M18.6 0.0 L18.6 16.2 M18.6 7.8 L24.0 7.8"/><ellipse cx="13.8" cy="22.4" rx="6.8" ry="5.6"/></g></g><g transform="translate(222.86,-26.00) scale(0.96,1)"><g fill="none" stroke="#000" stroke-width="9.3" stroke-linejoin="round"><path d="M6.1 1.4 L11.2 1.4 M2.5 4.2 L14.8 4.2 M18.6 0.0 L18.6 16.2 M18.6 7.8 L24.0 7.8 M6.6 17.8 L6.6 26.2 L22.1 26.2"/><ellipse cx="8.6" cy="9.6" rx="5.6" ry="5.6"/></g></g><g transform="translate(258.47,-26.00) scale(0.96,1)"><g fill="none" stroke="#000" stroke-width="9.3" stroke-linejoin="round"><path d="M2.8 5.5 L14.2 5.5 L13.9 15.1 L10.7 24.1 M18.1 1.7 L18.1 25.8 M14.3 12.9 L18.1 12.9 M23.7 0.0 L23.7 28.0"/></g></g><g transform="translate(294.08,-26.00) scale(0.96,1)"><g fill="none" stroke="#000" stroke-width="7.2540000000000004" stroke-linejoin="round"><path d="M20.2 0.0 L20.2 16.2 M9.0 17.8 L8.7 21.6 L5.1 26.9 M8.9 21.6 L13.0 26.9 M18.5 17.8 L18.1 21.6 L14.5 26.9 M18.3 21.6 L22.5 26.9"/><ellipse cx="8.6" cy="7.6" rx="5.1" ry="4.6"/></g></g><g transform="translate(321.08,-26.00) scale(0.96,1)"><g fill="none" stroke="#000" stroke-width="9.3" stroke-linejoin="round"><path d="M7.3 0.9 L7.3 8.4 L20.6 8.4 M1.1 12.9 L25.9 12.9 M6.9 18.3 L6.9 26.3 L21.1 26.3"/></g></g><g transform="translate(348.08,-26.00) scale(0.96,1)"><g fill="none" stroke="#000" stroke-width="9.3" stroke-linejoin="round"><path d="M14.7 5.0 L3.4 5.0 L3.4 22.5 L15.3 22.5 M18.1 1.7 L18.1 25.8 M14.3 12.9 L18.1 12.9 M23.7 0.0 L23.7 28.0"/></g></g><g transform="translate(383.69,-26.00) scale(0.96,1)"><g fill="none" stroke="#000" stroke-width="7.2540000000000004" stroke-linejoin="round"><path d="M3.0 2.4 L14.3 2.4 M8.6 2.4 L8.1 6.9 L2.7 13.4 M8.4 6.9 L14.5 13.4 M18.6 0.0 L18.6 16.2 M18.6 7.8 L24.0 7.8 M6.2 18.2 L20.6 18.2 L20.6 22.2 L7.0 22.2 L7.0 26.4 L22.1 26.4"/></g></g><g transform="translate(410.69,-26.00) scale(0.96,1)"><g fill="none" stroke="#000" stroke-width="9.3" stroke-linejoin="round"><path d="M6.9 2.5 L20.1 2.5 L20.1 13.2 L6.9 13.2 L6.9 2.1 M13.5 15.2 L13.5 20.8 M1.1 20.8 L25.9 20.8"/></g></g><g transform="translate(437.69,-26.00) scale(0.96,1)"><g fill="none" stroke="#000" stroke-width="9.3" stroke-linejoin="round"><path d="M6.6 2.2 L19.7 2.2 L19.7 7.6 L7.3 7.6 L7.3 13.2 L21.1 13.2 M1.1 20.2 L25.9 20.2"/></g></g><g transform="translate(464.69,-26.00) scale(0.96,1)"><g fill="none" stroke="#000" stroke-width="7.2540000000000004" stroke-linejoin="round"><path d="M2.7 2.7 L13.7 2.7 L13.4 8.2 L10.3 13.4 M18.1 1.0 L18.1 14.9 M14.3 7.5 L18.1 7.5 M23.7 0.0 L23.7 16.2 M9.0 17.8 L8.7 21.6 L5.1 26.9 M8.9 21.6 L13.0 26.9 M18.5 17.8 L18.1 21.6 L14.5 26.9 M18.3 21.6 L22.5 26.9"/></g></g><g transform="translate(491.69,-26.00) scale(0.96,1)"><g fill="none" stroke="#000" stroke-width="9.3" stroke-linejoin="round"><path d="M14.7 5.0 L3.4 5.0 L3.4 22.5 L15.3 22.5 M18.6 0.0 L18.6 28.0 M18.6 13.4 L24.0 13.4"/></g></g><g transform="translate(659.91,-26.00) scale(0.96,1)"><g fill="none" stroke="#000" stroke-width="7.2540000000000004" stroke-linejoin="round"><path d="M1.1 12.9 L25.9 12.9 M6.6 18.7 L19.7 18.7 L19.7 22.5 L7.3 22.5 L7.3 26.5 L21.1 26.5"/><ellipse cx="13.5" cy="5.0" rx="5.8" ry="4.4"/></g></g><g transform="translate(695.52,-26.00) scale(0.96,1)"><g fill="none" stroke="#000" stroke-width="9.3" stroke-linejoin="round"><path d="M3.3 2.4 L14.0 2.4 L14.0 12.7 L3.3 12.7 L3.3 2.0 M18.6 0.0 L18.6 16.2 M18.6 7.8 L24.0 7.8 M6.2 18.4 L21.3 18.4 M13.8 18.4 L13.0 21.9 L5.8 26.9 M13.4 21.9 L21.7 26.9"/></g></g><g transform="translate(722.52,-26.00) scale(0.96,1)"><g fill="none" stroke="#000" stroke-width="9.3" stroke-linejoin="round"><path d="M9.2 0.4 L9.2 2.8 M3.6 3.6 L14.8 3.6 M9.2 3.6 L8.6 7.3 L3.3 12.8 M8.9 7.3 L15.1 12.8 M1.1 16.8 L19.4 16.8 M10.3 16.8 L10.3 25.6 M22.5 0.0 L22.5 28.0 M17.2 13.4 L22.5 13.4"/></g></g><g transform="translate(749.52,-26.00) scale(0.96,1)"><g fill="none" stroke="#000" stroke-width="9.3" stroke-linejoin="round"><path d="M3.6 2.4 L14.8 2.4 M9.2 2.4 L8.6 6.7 L3.3 12.8 M8.9 6.7 L15.1 12.8 M1.1 16.8 L19.4 16.8 M10.3 16.8 L10.3 25.6 M22.5 0.0 L22.5 28.0 M17.2 13.4 L22.5 13.4"/></g></g><g transform="translate(776.52,-26.00) scale(0.96,1)"><g fill="none" stroke="#000" stroke-width="9.3" stroke-linejoin="round"><path d="M18.6 0.0 L18.6 28.0 M18.6 9.8 L24.0 9.8 M18.6 17.4 L24.0 17.4"/><ellipse cx="8.9" cy="14.0" rx="5.6" ry="8.1"/></g></g><g transform="translate(812.13,-26.00) scale(0.96,1)"><g fill="none" stroke="#000" stroke-width="9.3" stroke-linejoin="round"><path d="M6.3 3.2 L11.5 3.2 M2.5 8.2 L15.3 8.2 M18.6 0.0 L18.6 28.0 M18.6 13.4 L24.0 13.4"/><ellipse cx="8.9" cy="17.6" rx="5.6" ry="6.0"/></g></g><g transform="translate(839.13,-26.00) scale(0.96,1)"><g fill="none" stroke="#000" stroke-width="9.3" stroke-linejoin="round"><path d="M7.3 0.9 L7.3 8.4 L20.6 8.4 M1.1 12.9 L25.9 12.9 M6.9 18.3 L6.9 26.3 L21.1 26.3"/></g></g><g transform="translate(866.13,-26.00) scale(0.96,1)"><g fill="none" stroke="#000" stroke-width="9.3" stroke-linejoin="round"><path d="M20.0 1.5 L7.3 1.5 L7.3 8.4 L20.6 8.4 M1.1 12.9 L25.9 12.9 M13.5 18.3 L12.8 21.9 L6.2 27.0 M13.2 21.9 L20.8 27.0"/></g></g><g transform="translate(893.13,-26.00) scale(0.96,1)"><g fill="none" stroke="#000" stroke-width="9.3" stroke-linejoin="round"><path d="M6.3 3.2 L11.5 3.2 M2.5 8.2 L15.3 8.2 M18.6 0.0 L18.6 28.0 M18.6 13.4 L24.0 13.4"/><ellipse cx="8.9" cy="17.6" rx="5.6" ry="6.0"/></g></g><g transform="translate(920.13,-26.00) scale(0.96,1)"><g fill="none" stroke="#000" stroke-width="9.3" stroke-linejoin="round"><path d="M14.7 5.0 L3.4 5.0 L3.4 22.5 L15.3 22.5 M18.6 0.0 L18.6 28.0 M18.6 13.4 L24.0 13.4"/></g></g><text x="0.00" y="0" style="font-family:'Liberation Sans';font-weight:bold;font-size:31px;font-kerning:none;white-space:pre" fill="#000" stroke="#000" stroke-width="5.0" stroke-linejoin="round" xml:space="preserve">message</text><text x="159.70" y="0" style="font-family:'Liberation Sans';font-weight:bold;font-size:31px;font-kerning:none;white-space:pre" fill="#000" stroke="#000" stroke-width="5.0" stroke-linejoin="round" xml:space="preserve"> </text><text x="249.32" y="0" style="font-family:'Liberation Sans';font-weight:bold;font-size:31px;font-kerning:none;white-space:pre" fill="#000" stroke="#000" stroke-width="5.0" stroke-linejoin="round" xml:space="preserve"> </text><text x="284.93" y="0" style="font-family:'Liberation Sans';font-weight:bold;font-size:31px;font-kerning:none;white-space:pre" fill="#000" stroke="#000" stroke-width="5.0" stroke-linejoin="round" xml:space="preserve"> </text><text x="374.54" y="0" style="font-family:'Liberation Sans';font-weight:bold;font-size:31px;font-kerning:none;white-space:pre" fill="#000" stroke="#000" stroke-width="5.0" stroke-linejoin="round" xml:space="preserve"> </text><text x="518.15" y="0" style="font-family:'Liberation Sans';font-weight:bold;font-size:31px;font-kerning:none;white-space:pre" fill="#000" stroke="#000" stroke-width="5.0" stroke-linejoin="round" xml:space="preserve">. protocol</text><text x="686.37" y="0" style="font-family:'Liberation Sans';font-weight:bold;font-size:31px;font-kerning:none;white-space:pre" fill="#000" stroke="#000" stroke-width="5.0" stroke-linejoin="round" xml:space="preserve"> </text><text x="802.98" y="0" style="font-family:'Liberation Sans';font-weight:bold;font-size:31px;font-kerning:none;white-space:pre" fill="#000" stroke="#000" stroke-width="5.0" stroke-linejoin="round" xml:space="preserve"> </text><text x="946.59" y="0" style="font-family:'Liberation Sans';font-weight:bold;font-size:31px;font-kerning:none;white-space:pre" fill="#000" stroke="#000" stroke-width="5.0" stroke-linejoin="round" xml:space="preserve">.</text></g><g transform="translate(133.24,-26.00) scale(0.96,1)"><g fill="none" stroke="#ff9a1e" stroke-width="4.3" stroke-linejoin="round"><path d="M7.3 0.9 L7.3 8.4 L20.6 8.4 M1.1 12.9 L25.9 12.9 M6.9 18.3 L6.9 26.3 L21.1 26.3"/></g></g><g transform="translate(168.86,-26.00) scale(0.96,1)"><g fill="none" stroke="#ff9a1e" stroke-width="4.3" stroke-linejoin="round"><path d="M20.2 0.0 L20.2 28.0"/><ellipse cx="8.9" cy="14.0" rx="5.2" ry="8.1"/></g></g><g transform="translate(195.86,-26.00) scale(0.96,1)"><g fill="none" stroke="#ff9a1e" stroke-width="4.3" stroke-linejoin="round"><path d="M8.6 1.6 L8.1 6.5 L2.7 13.4 M8.4 6.5 L14.5 13.4 M18.6 0.0 L18.6 16.2 M18.6 7.8 L24.0 7.8"/><ellipse cx="13.8" cy="22.4" rx="6.8" ry="3.6"/></g></g><g transform="translate(222.86,-26.00) scale(0.96,1)"><g fill="none" stroke="#ff9a1e" stroke-width="4.3" stroke-linejoin="round"><path d="M6.1 1.4 L11.2 1.4 M2.5 4.2 L14.8 4.2 M18.6 0.0 L18.6 16.2 M18.6 7.8 L24.0 7.8 M6.6 17.8 L6.6 26.2 L22.1 26.2"/><ellipse cx="8.6" cy="9.6" rx="3.8" ry="3.5"/></g></g><g transform="translate(258.47,-26.00) scale(0.96,1)"><g fill="none" stroke="#ff9a1e" stroke-width="4.3" stroke-linejoin="round"><path d="M2.8 5.5 L14.2 5.5 L13.9 15.1 L10.7 24.1 M18.1 1.7 L18.1 25.8 M14.3 12.9 L18.1 12.9 M23.7 0.0 L23.7 28.0"/></g></g><g transform="translate(294.08,-26.00) scale(0.96,1)"><g fill="none" stroke="#ff9a1e" stroke-width="3.354" stroke-linejoin="round"><path d="M20.2 0.0 L20.2 16.2 M9.0 17.8 L8.7 21.6 L5.1 26.9 M8.9 21.6 L13.0 26.9 M18.5 17.8 L18.1 21.6 L14.5 26.9 M18.3 21.6 L22.5 26.9"/><ellipse cx="8.6" cy="7.6" rx="5.1" ry="4.6"/></g></g><g transform="translate(321.08,-26.00) scale(0.96,1)"><g fill="none" stroke="#ff9a1e" stroke-width="4.3" stroke-linejoin="round"><path d="M7.3 0.9 L7.3 8.4 L20.6 8.4 M1.1 12.9 L25.9 12.9 M6.9 18.3 L6.9 26.3 L21.1 26.3"/></g></g><g transform="translate(348.08,-26.00) scale(0.96,1)"><g fill="none" stroke="#ff9a1e" stroke-width="4.3" stroke-linejoin="round"><path d="M14.7 5.0 L3.4 5.0 L3.4 22.5 L15.3 22.5 M18.1 1.7 L18.1 25.8 M14.3 12.9 L18.1 12.9 M23.7 0.0 L23.7 28.0"/></g></g><g transform="translate(383.69,-26.00) scale(0.96,1)"><g fill="none" stroke="#ff9a1e" stroke-width="3.354" stroke-linejoin="round"><path d="M3.0 2.4 L14.3 2.4 M8.6 2.4 L8.1 6.9 L2.7 13.4 M8.4 6.9 L14.5 13.4 M18.6 0.0 L18.6 16.2 M18.6 7.8 L24.0 7.8 M6.2 18.2 L20.6 18.2 L20.6 22.2 L7.0 22.2 L7.0 26.4 L22.1 26.4"/></g></g><g transform="translate(410.69,-26.00) scale(0.96,1)"><g fill="none" stroke="#ff9a1e" stroke-width="4.3" stroke-linejoin="round"><path d="M6.9 2.5 L20.1 2.5 L20.1 13.2 L6.9 13.2 L6.9 2.1 M13.5 15.2 L13.5 20.8 M1.1 20.8 L25.9 20.8"/></g></g><g transform="translate(437.69,-26.00) scale(0.96,1)"><g fill="none" stroke="#ff9a1e" stroke-width="4.3" stroke-linejoin="round"><path d="M6.6 2.2 L19.7 2.2 L19.7 7.6 L7.3 7.6 L7.3 13.2 L21.1 13.2 M1.1 20.2 L25.9 20.2"/></g></g><g transform="translate(464.69,-26.00) scale(0.96,1)"><g fill="none" stroke="#ff9a1e" stroke-width="3.354" stroke-linejoin="round"><path d="M2.7 2.7 L13.7 2.7 L13.4 8.2 L10.3 13.4 M18.1 1.0 L18.1 14.9 M14.3 7.5 L18.1 7.5 M23.7 0.0 L23.7 16.2 M9.0 17.8 L8.7 21.6 L5.1 26.9 M8.9 21.6 L13.0 26.9 M18.5 17.8 L18.1 21.6 L14.5 26.9 M18.3 21.6 L22.5 26.9"/></g></g><g transform="translate(491.69,-26.00) scale(0.96,1)"><g fill="none" stroke="#ff9a1e" stroke-width="4.3" stroke-linejoin="round"><path d="M14.7 5.0 L3.4 5.0 L3.4 22.5 L15.3 22.5 M18.6 0.0 L18.6 28.0 M18.6 13.4 L24.0 13.4"/></g></g><g transform="translate(659.91,-26.00) scale(0.96,1)"><g fill="none" stroke="#ff9a1e" stroke-width="3.354" stroke-linejoin="round"><path d="M1.1 12.9 L25.9 12.9 M6.6 18.7 L19.7 18.7 L19.7 22.5 L7.3 22.5 L7.3 26.5 L21.1 26.5"/><ellipse cx="13.5" cy="5.0" rx="5.8" ry="3.2"/></g></g><g transform="translate(695.52,-26.00) scale(0.96,1)"><g fill="none" stroke="#ff9a1e" stroke-width="4.3" stroke-linejoin="round"><path d="M3.3 2.4 L14.0 2.4 L14.0 12.7 L3.3 12.7 L3.3 2.0 M18.6 0.0 L18.6 16.2 M18.6 7.8 L24.0 7.8 M6.2 18.4 L21.3 18.4 M13.8 18.4 L13.0 21.9 L5.8 26.9 M13.4 21.9 L21.7 26.9"/></g></g><g transform="translate(722.52,-26.00) scale(0.96,1)"><g fill="none" stroke="#ff9a1e" stroke-width="4.3" stroke-linejoin="round"><path d="M9.2 0.4 L9.2 2.8 M3.6 3.6 L14.8 3.6 M9.2 3.6 L8.6 7.3 L3.3 12.8 M8.9 7.3 L15.1 12.8 M1.1 16.8 L19.4 16.8 M10.3 16.8 L10.3 25.6 M22.5 0.0 L22.5 28.0 M17.2 13.4 L22.5 13.4"/></g></g><g transform="translate(749.52,-26.00) scale(0.96,1)"><g fill="none" stroke="#ff9a1e" stroke-width="4.3" stroke-linejoin="round"><path d="M3.6 2.4 L14.8 2.4 M9.2 2.4 L8.6 6.7 L3.3 12.8 M8.9 6.7 L15.1 12.8 M1.1 16.8 L19.4 16.8 M10.3 16.8 L10.3 25.6 M22.5 0.0 L22.5 28.0 M17.2 13.4 L22.5 13.4"/></g></g><g transform="translate(776.52,-26.00) scale(0.96,1)"><g fill="none" stroke="#ff9a1e" stroke-width="4.3" stroke-linejoin="round"><path d="M18.6 0.0 L18.6 28.0 M18.6 9.8 L24.0 9.8 M18.6 17.4 L24.0 17.4"/><ellipse cx="8.9" cy="14.0" rx="5.2" ry="8.1"/></g></g><g transform="translate(812.13,-26.00) scale(0.96,1)"><g fill="none" stroke="#ff9a1e" stroke-width="4.3" stroke-linejoin="round"><path d="M6.3 3.2 L11.5 3.2 M2.5 8.2 L15.3 8.2 M18.6 0.0 L18.6 28.0 M18.6 13.4 L24.0 13.4"/><ellipse cx="8.9" cy="17.6" rx="3.9" ry="6.0"/></g></g><g transform="translate(839.13,-26.00) scale(0.96,1)"><g fill="none" stroke="#ff9a1e" stroke-width="4.3" stroke-linejoin="round"><path d="M7.3 0.9 L7.3 8.4 L20.6 8.4 M1.1 12.9 L25.9 12.9 M6.9 18.3 L6.9 26.3 L21.1 26.3"/></g></g><g transform="translate(866.13,-26.00) scale(0.96,1)"><g fill="none" stroke="#ff9a1e" stroke-width="4.3" stroke-linejoin="round"><path d="M20.0 1.5 L7.3 1.5 L7.3 8.4 L20.6 8.4 M1.1 12.9 L25.9 12.9 M13.5 18.3 L12.8 21.9 L6.2 27.0 M13.2 21.9 L20.8 27.0"/></g></g><g transform="translate(893.13,-26.00) scale(0.96,1)"><g fill="none" stroke="#ff9a1e" stroke-width="4.3" stroke-linejoin="round"><path d="M6.3 3.2 L11.5 3.2 M2.5 8.2 L15.3 8.2 M18.6 0.0 L18.6 28.0 M18.6 13.4 L24.0 13.4"/><ellipse cx="8.9" cy="17.6" rx="3.9" ry="6.0"/></g></g><g transform="translate(920.13,-26.00) scale(0.96,1)"><g fill="none" stroke="#ff9a1e" stroke-width="4.3" stroke-linejoin="round"><path d="M14.7 5.0 L3.4 5.0 L3.4 22.5 L15.3 22.5 M18.6 0.0 L18.6 28.0 M18.6 13.4 L24.0 13.4"/></g></g><text x="0.00" y="0" style="font-family:'Liberation Sans';font-weight:bold;font-size:31px;font-kerning:none;white-space:pre" fill="#ff9a1e" stroke="#ff9a1e" stroke-width="0.8" xml:space="preserve">message</text><text x="159.70" y="0" style="font-family:'Liberation Sans';font-weight:bold;font-size:31px;font-kerning:none;white-space:pre" fill="#ff9a1e" stroke="#ff9a1e" stroke-width="0.8" xml:space="preserve"> </text><text x="249.32" y="0" style="font-family:'Liberation Sans';font-weight:bold;font-size:31px;font-kerning:none;white-space:pre" fill="#ff9a1e" stroke="#ff9a1e" stroke-width="0.8" xml:space="preserve"> </text><text x="284.93" y="0" style="font-family:'Liberation Sans';font-weight:bold;font-size:31px;font-kerning:none;white-space:pre" fill="#ff9a1e" stroke="#ff9a1e" stroke-width="0.8" xml:space="preserve"> </text><text x="374.54" y="0" style="font-family:'Liberation Sans';font-weight:bold;font-size:31px;font-kerning:none;white-space:pre" fill="#ff9a1e" stroke="#ff9a1e" stroke-width="0.8" xml:space="preserve"> </text><text x="518.15" y="0" style="font-family:'Liberation Sans';font-weight:bold;font-size:31px;font-kerning:none;white-space:pre" fill="#ff9a1e" stroke="#ff9a1e" stroke-width="0.8" xml:space="preserve">. protocol</text><text x="686.37" y="0" style="font-family:'Liberation Sans';font-weight:bold;font-size:31px;font-kerning:none;white-space:pre" fill="#ff9a1e" stroke="#ff9a1e" stroke-width="0.8" xml:space="preserve"> </text><text x="802.98" y="0" style="font-family:'Liberation Sans';font-weight:bold;font-size:31px;font-kerning:none;white-space:pre" fill="#ff9a1e" stroke="#ff9a1e" stroke-width="0.8" xml:space="preserve"> </text><text x="946.59" y="0" style="font-family:'Liberation Sans';font-weight:bold;font-size:31px;font-kerning:none;white-space:pre" fill="#ff9a1e" stroke="#ff9a1e" stroke-width="0.8" xml:space="preserve">.</text></svg>
</body></html>
